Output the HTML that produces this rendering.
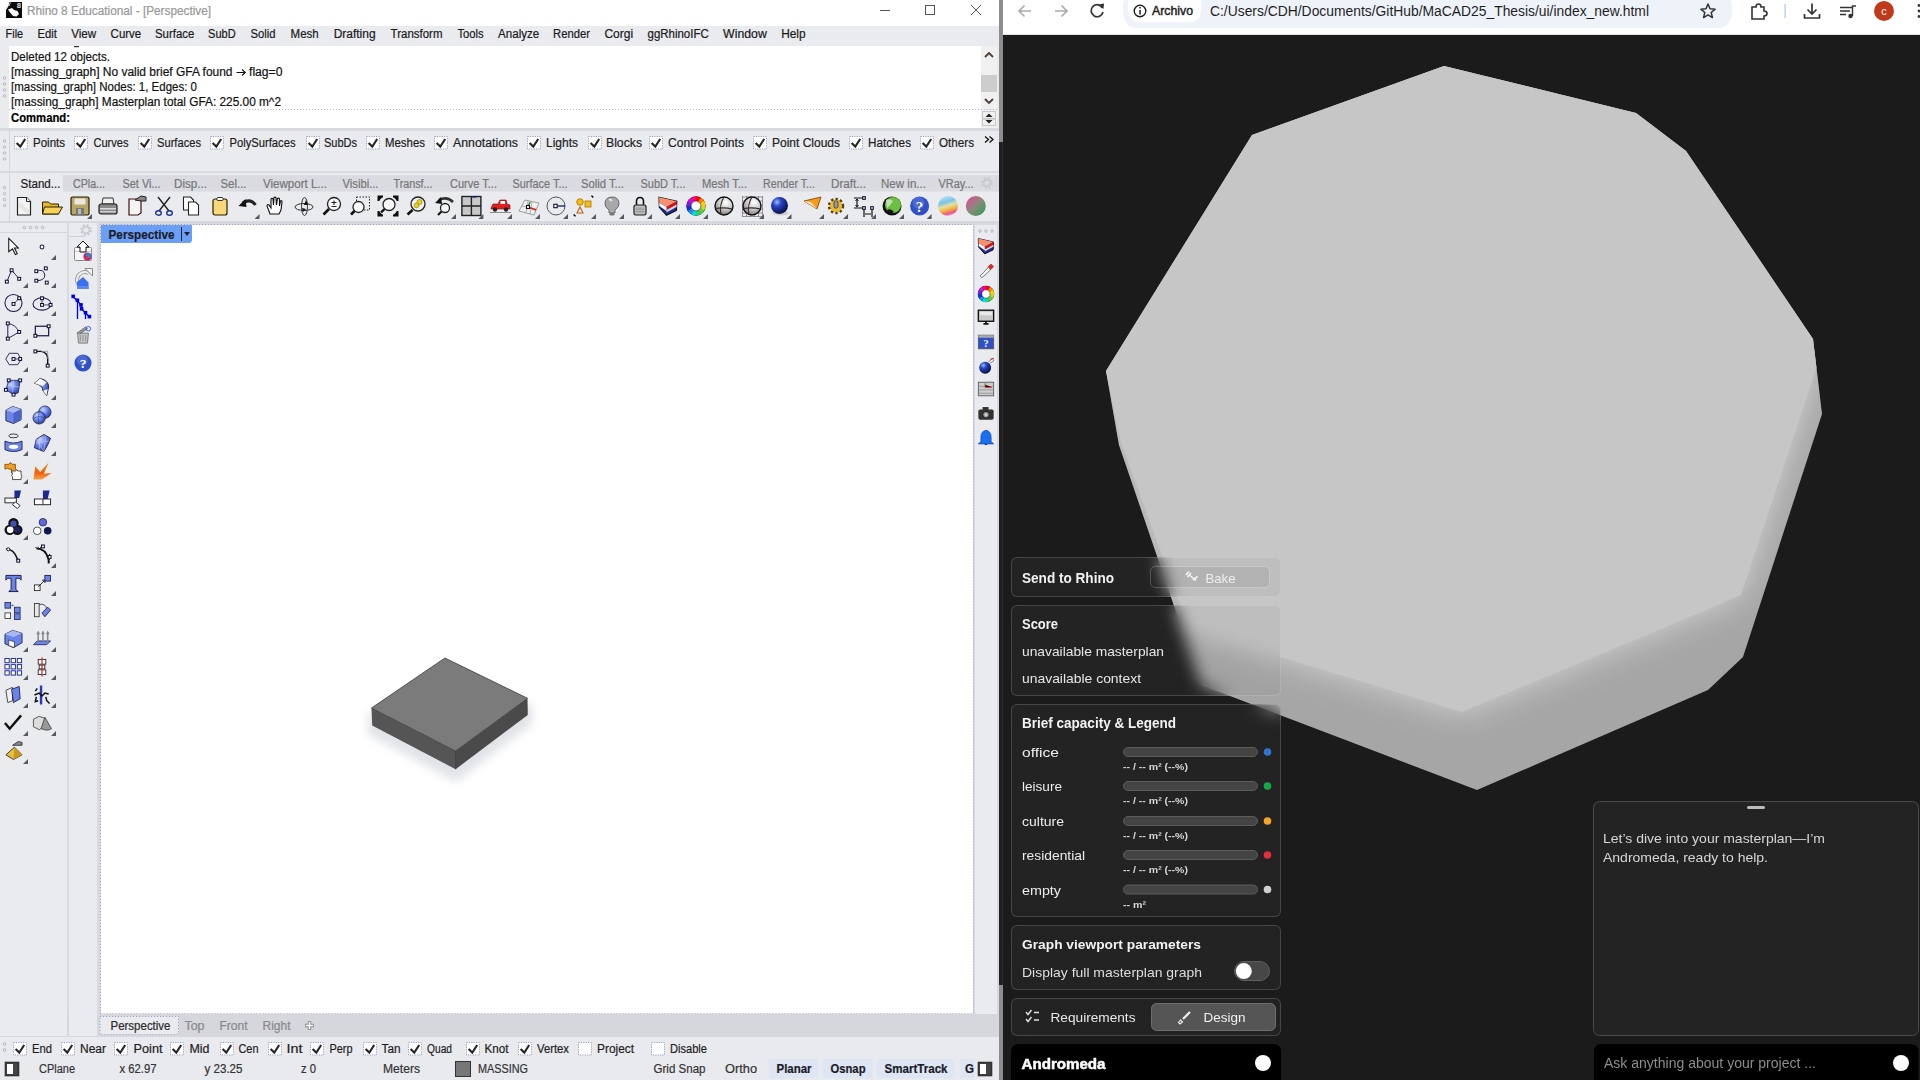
<!DOCTYPE html>
<html><head><meta charset="utf-8"><title>Rhino + Andromeda</title>
<style>html,body{margin:0;padding:0;width:1920px;height:1080px;overflow:hidden;background:#1b1b1b;font-family:"Liberation Sans",sans-serif;position:relative}</style>
</head><body><svg width="1920" height="1080" viewBox="0 0 1920 1080" style="position:absolute;left:0;top:0;display:block"><defs><filter id="shadow" x="-30%" y="-30%" width="160%" height="160%"><feGaussianBlur stdDeviation="5"/></filter><radialGradient id="gs" cx="0.6" cy="0.3" r="0.8"><stop offset="0" stop-color="#ffffff"/><stop offset="0.45" stop-color="#d0d0d0"/><stop offset="1" stop-color="#6a6a6a"/></radialGradient><linearGradient id="rb" x1="0.3" y1="0" x2="0.6" y2="1"><stop offset="0" stop-color="#c8e0f0"/><stop offset="0.3" stop-color="#78c4ec"/><stop offset="0.5" stop-color="#e8e0a0"/><stop offset="0.7" stop-color="#f0b040"/><stop offset="0.88" stop-color="#f05090"/><stop offset="1" stop-color="#f8d0e0"/></linearGradient>
<linearGradient id="pg" x1="0" y1="0" x2="1" y2="1"><stop offset="0" stop-color="#f040a0"/><stop offset="0.5" stop-color="#8a8a7a"/><stop offset="1" stop-color="#20a050"/></linearGradient>
<radialGradient id="bs" cx="0.35" cy="0.3" r="0.7"><stop offset="0" stop-color="#a0c0ff"/><stop offset="0.35" stop-color="#2848c8"/><stop offset="1" stop-color="#08104a"/></radialGradient>
<linearGradient id="cw" x1="0" y1="0" x2="1" y2="1"><stop offset="0" stop-color="#f03030"/><stop offset="0.25" stop-color="#f0c020"/><stop offset="0.5" stop-color="#40c040"/><stop offset="0.75" stop-color="#2040f0"/><stop offset="1" stop-color="#c020c0"/></linearGradient>
<radialGradient id="bsph" cx="0.35" cy="0.3" r="0.75"><stop offset="0" stop-color="#c8d4ff"/><stop offset="0.5" stop-color="#6a84e8"/><stop offset="1" stop-color="#2c3c9a"/></radialGradient><linearGradient id="ex" x1="0" y1="0" x2="0" y2="1"><stop offset="0" stop-color="#e0a000"/><stop offset="0.6" stop-color="#f06010"/><stop offset="1" stop-color="#f8a040"/></linearGradient><clipPath id="silclip"><polygon points="1444,66 1636,113 1686,151 1813,339 1822,414 1743,657 1708,690 1477,790 1201,685 1157,556 1119,445 1106,371 1252,135"/></clipPath><filter id="sideblur" x="-20%" y="-20%" width="140%" height="140%"><feGaussianBlur stdDeviation="16"/></filter><g id="mass"><polygon points="1444,66 1636,113 1686,151 1813,339 1822,414 1743,657 1708,690 1477,790 1201,685 1157,556 1119,445 1106,371 1252,135" fill="#a6a6a6"/><g clip-path="url(#silclip)"><polygon points="1444,66 1636,113 1686,151 1813,339 1816.5,368 1741,595 1697,614 1462,712 1189,629 1121,442 1106,371 1252,135" fill="#d2d2d2" filter="url(#sideblur)"/></g><polygon points="1444,66 1636,113 1686,151 1813,339 1816.5,368 1741,595 1697,614 1462,712 1189,629 1121,442 1106,371 1252,135" fill="#c6c6c6"/></g><filter id="bblur" x="-50%" y="-50%" width="200%" height="200%"><feGaussianBlur stdDeviation="7"/></filter></defs><rect x="0" y="0" width="999" height="1080" fill="#e9ebef" />
<rect x="0" y="0" width="999" height="26" fill="#ffffff" />
<path d="M9.5,2 L22,2 L22,18 L6,18 L6,10 L8.5,6 Z" fill="#0a0a0a" />
<path d="M8,9.5 L12,8 L14,10 L17.5,11 L19,14 L16.5,16.5 L13,16 L10,12.5 Z" fill="#ffffff" />
<path d="M9,6 L10.5,2.5" fill="none" stroke="#fff" stroke-width="0.8" />
<text x="19" y="8" font-family="Liberation Sans" font-size="7" fill="#ffffff" stroke="#ffffff" stroke-width="0.2" text-anchor="middle" >8</text>
<text x="27" y="14.6" font-family="Liberation Sans" font-size="12" fill="#979797" stroke="#979797" stroke-width="0.2" textLength="184" lengthAdjust="spacingAndGlyphs" >Rhino 8 Educational - [Perspective]</text>
<rect x="880" y="10" width="10" height="1" fill="#555" />
<rect x="925.5" y="5.5" width="9" height="9" fill="none" stroke="#555" stroke-width="1" />
<path d="M971,5 L981,15 M981,5 L971,15" fill="none" stroke="#555" stroke-width="1" />
<rect x="0" y="26" width="999" height="20" fill="#e9ebef" />
<text x="5.6" y="37.6" font-family="Liberation Sans" font-size="12" fill="#1a1a1a" stroke="#1a1a1a" stroke-width="0.2" textLength="17.5" lengthAdjust="spacingAndGlyphs" >File</text>
<text x="37.5" y="37.6" font-family="Liberation Sans" font-size="12" fill="#1a1a1a" stroke="#1a1a1a" stroke-width="0.2" textLength="19.4" lengthAdjust="spacingAndGlyphs" >Edit</text>
<text x="71.2" y="37.6" font-family="Liberation Sans" font-size="12" fill="#1a1a1a" stroke="#1a1a1a" stroke-width="0.2" textLength="25" lengthAdjust="spacingAndGlyphs" >View</text>
<text x="110.6" y="37.6" font-family="Liberation Sans" font-size="12" fill="#1a1a1a" stroke="#1a1a1a" stroke-width="0.2" textLength="30.6" lengthAdjust="spacingAndGlyphs" >Curve</text>
<text x="155" y="37.6" font-family="Liberation Sans" font-size="12" fill="#1a1a1a" stroke="#1a1a1a" stroke-width="0.2" textLength="39.4" lengthAdjust="spacingAndGlyphs" >Surface</text>
<text x="208.1" y="37.6" font-family="Liberation Sans" font-size="12" fill="#1a1a1a" stroke="#1a1a1a" stroke-width="0.2" textLength="27.5" lengthAdjust="spacingAndGlyphs" >SubD</text>
<text x="250.6" y="37.6" font-family="Liberation Sans" font-size="12" fill="#1a1a1a" stroke="#1a1a1a" stroke-width="0.2" textLength="25" lengthAdjust="spacingAndGlyphs" >Solid</text>
<text x="290.6" y="37.6" font-family="Liberation Sans" font-size="12" fill="#1a1a1a" stroke="#1a1a1a" stroke-width="0.2" textLength="28.1" lengthAdjust="spacingAndGlyphs" >Mesh</text>
<text x="333.7" y="37.6" font-family="Liberation Sans" font-size="12" fill="#1a1a1a" stroke="#1a1a1a" stroke-width="0.2" textLength="41.9" lengthAdjust="spacingAndGlyphs" >Drafting</text>
<text x="390.6" y="37.6" font-family="Liberation Sans" font-size="12" fill="#1a1a1a" stroke="#1a1a1a" stroke-width="0.2" textLength="51.9" lengthAdjust="spacingAndGlyphs" >Transform</text>
<text x="457.5" y="37.6" font-family="Liberation Sans" font-size="12" fill="#1a1a1a" stroke="#1a1a1a" stroke-width="0.2" textLength="26.2" lengthAdjust="spacingAndGlyphs" >Tools</text>
<text x="498.1" y="37.6" font-family="Liberation Sans" font-size="12" fill="#1a1a1a" stroke="#1a1a1a" stroke-width="0.2" textLength="41.2" lengthAdjust="spacingAndGlyphs" >Analyze</text>
<text x="553.1" y="37.6" font-family="Liberation Sans" font-size="12" fill="#1a1a1a" stroke="#1a1a1a" stroke-width="0.2" textLength="36.9" lengthAdjust="spacingAndGlyphs" >Render</text>
<text x="604.4" y="37.6" font-family="Liberation Sans" font-size="12" fill="#1a1a1a" stroke="#1a1a1a" stroke-width="0.2" textLength="28.7" lengthAdjust="spacingAndGlyphs" >Corgi</text>
<text x="647.5" y="37.6" font-family="Liberation Sans" font-size="12" fill="#1a1a1a" stroke="#1a1a1a" stroke-width="0.2" textLength="61.2" lengthAdjust="spacingAndGlyphs" >ggRhinoIFC</text>
<text x="723.1" y="37.6" font-family="Liberation Sans" font-size="12" fill="#1a1a1a" stroke="#1a1a1a" stroke-width="0.2" textLength="43.7" lengthAdjust="spacingAndGlyphs" >Window</text>
<text x="781.2" y="37.6" font-family="Liberation Sans" font-size="12" fill="#1a1a1a" stroke="#1a1a1a" stroke-width="0.2" textLength="24.4" lengthAdjust="spacingAndGlyphs" >Help</text>
<rect x="9" y="46" width="972" height="82" fill="#ffffff" />
<rect x="74" y="46" width="5" height="1.2" fill="#333" />
<text x="11" y="60.5" font-family="Liberation Sans" font-size="12" fill="#111" stroke="#111" stroke-width="0.2" textLength="99" lengthAdjust="spacingAndGlyphs" >Deleted 12 objects.</text>
<text x="11" y="75.5" font-family="Liberation Sans" font-size="12" fill="#111" stroke="#111" stroke-width="0.2" textLength="221.5" lengthAdjust="spacingAndGlyphs" >[massing_graph] No valid brief GFA found</text>
<text x="11" y="90.5" font-family="Liberation Sans" font-size="12" fill="#111" stroke="#111" stroke-width="0.2" textLength="186" lengthAdjust="spacingAndGlyphs" >[massing_graph] Nodes: 1, Edges: 0</text>
<text x="11" y="105.5" font-family="Liberation Sans" font-size="12" fill="#111" stroke="#111" stroke-width="0.2" textLength="270" lengthAdjust="spacingAndGlyphs" >[massing_graph] Masterplan total GFA: 225.00 m^2</text>
<path d="M236.5,72.5 L245,72.5 M242,69.5 L245.3,72.5 L242,75.5" fill="none" stroke="#111" stroke-width="1.1" />
<text x="249" y="75.5" font-family="Liberation Sans" font-size="12" fill="#111" stroke="#111" stroke-width="0.2" textLength="33.5" lengthAdjust="spacingAndGlyphs" >flag=0</text>
<text x="11" y="121.5" font-family="Liberation Sans" font-size="12" fill="#000" stroke="#000" stroke-width="0.2" font-weight="700" textLength="59" lengthAdjust="spacingAndGlyphs" >Command:</text>
<path d="M9,109.5 L997,109.5" fill="none" stroke="#b4b8d8" stroke-width="1" stroke-dasharray="1 2"/>
<circle cx="4.5" cy="78" r="1.3" fill="none" stroke="#a8acb8" stroke-width="0.8"/>
<circle cx="4.5" cy="84" r="1.3" fill="none" stroke="#a8acb8" stroke-width="0.8"/>
<circle cx="4.5" cy="90" r="1.3" fill="none" stroke="#a8acb8" stroke-width="0.8"/>
<circle cx="4.5" cy="96" r="1.3" fill="none" stroke="#a8acb8" stroke-width="0.8"/>
<rect x="981" y="46" width="16" height="63" fill="#f0f0f0" />
<path d="M985,57 L989,53 L993,57" fill="none" stroke="#4a4038" stroke-width="1.9" />
<rect x="981" y="75" width="16" height="17" fill="#cdcdcd" />
<path d="M985,99 L989,103 L993,99" fill="none" stroke="#4a4038" stroke-width="1.9" />
<rect x="981" y="110" width="16" height="18" fill="#f0f0f0" />
<rect x="982.5" y="111.5" width="13" height="14" fill="none" stroke="#c8c8c8" stroke-width="1" />
<polygon points="985.5,117 992.5,117 989,113.5" fill="#222" />
<polygon points="985.5,120 992.5,120 989,123.5" fill="#222" />
<rect x="983" y="118" width="12" height="1.6" fill="#c4c4c4" />
<rect x="0" y="128" width="999" height="3" fill="#d8dadf" />
<rect x="0" y="131" width="999" height="40" fill="#e9ebef" />
<circle cx="4.5" cy="141" r="1.3" fill="none" stroke="#a8acb8" stroke-width="0.8"/>
<circle cx="4.5" cy="147" r="1.3" fill="none" stroke="#a8acb8" stroke-width="0.8"/>
<circle cx="4.5" cy="153" r="1.3" fill="none" stroke="#a8acb8" stroke-width="0.8"/>
<circle cx="4.5" cy="159" r="1.3" fill="none" stroke="#a8acb8" stroke-width="0.8"/>
<rect x="9" y="131" width="1" height="40" fill="#d4d6db" />
<rect x="14.5" y="136.5" width="13" height="12.5" fill="#fdfdfd" stroke="#9a9fc8" stroke-width="1" stroke-dasharray="1.2 1.2"/>
<path d="M16.6,143 L20.3,146.6 L25.2,139" fill="none" stroke="#262626" stroke-width="2.1" />
<text x="33" y="146.5" font-family="Liberation Sans" font-size="12" fill="#1e1e1e" stroke="#1e1e1e" stroke-width="0.2" textLength="32" lengthAdjust="spacingAndGlyphs" >Points</text>
<rect x="74.5" y="136.5" width="13" height="12.5" fill="#fdfdfd" stroke="#9a9fc8" stroke-width="1" stroke-dasharray="1.2 1.2"/>
<path d="M76.6,143 L80.3,146.6 L85.2,139" fill="none" stroke="#262626" stroke-width="2.1" />
<text x="93.5" y="146.5" font-family="Liberation Sans" font-size="12" fill="#1e1e1e" stroke="#1e1e1e" stroke-width="0.2" textLength="35" lengthAdjust="spacingAndGlyphs" >Curves</text>
<rect x="138.5" y="136.5" width="13" height="12.5" fill="#fdfdfd" stroke="#9a9fc8" stroke-width="1" stroke-dasharray="1.2 1.2"/>
<path d="M140.6,143 L144.3,146.6 L149.2,139" fill="none" stroke="#262626" stroke-width="2.1" />
<text x="157" y="146.5" font-family="Liberation Sans" font-size="12" fill="#1e1e1e" stroke="#1e1e1e" stroke-width="0.2" textLength="44" lengthAdjust="spacingAndGlyphs" >Surfaces</text>
<rect x="210.5" y="136.5" width="13" height="12.5" fill="#fdfdfd" stroke="#9a9fc8" stroke-width="1" stroke-dasharray="1.2 1.2"/>
<path d="M212.6,143 L216.3,146.6 L221.2,139" fill="none" stroke="#262626" stroke-width="2.1" />
<text x="229.5" y="146.5" font-family="Liberation Sans" font-size="12" fill="#1e1e1e" stroke="#1e1e1e" stroke-width="0.2" textLength="66" lengthAdjust="spacingAndGlyphs" >PolySurfaces</text>
<rect x="306.5" y="136.5" width="13" height="12.5" fill="#fdfdfd" stroke="#9a9fc8" stroke-width="1" stroke-dasharray="1.2 1.2"/>
<path d="M308.6,143 L312.3,146.6 L317.2,139" fill="none" stroke="#262626" stroke-width="2.1" />
<text x="324" y="146.5" font-family="Liberation Sans" font-size="12" fill="#1e1e1e" stroke="#1e1e1e" stroke-width="0.2" textLength="33" lengthAdjust="spacingAndGlyphs" >SubDs</text>
<rect x="366.5" y="136.5" width="13" height="12.5" fill="#fdfdfd" stroke="#9a9fc8" stroke-width="1" stroke-dasharray="1.2 1.2"/>
<path d="M368.6,143 L372.3,146.6 L377.2,139" fill="none" stroke="#262626" stroke-width="2.1" />
<text x="385" y="146.5" font-family="Liberation Sans" font-size="12" fill="#1e1e1e" stroke="#1e1e1e" stroke-width="0.2" textLength="40" lengthAdjust="spacingAndGlyphs" >Meshes</text>
<rect x="434.5" y="136.5" width="13" height="12.5" fill="#fdfdfd" stroke="#9a9fc8" stroke-width="1" stroke-dasharray="1.2 1.2"/>
<path d="M436.6,143 L440.3,146.6 L445.2,139" fill="none" stroke="#262626" stroke-width="2.1" />
<text x="453" y="146.5" font-family="Liberation Sans" font-size="12" fill="#1e1e1e" stroke="#1e1e1e" stroke-width="0.2" textLength="65" lengthAdjust="spacingAndGlyphs" >Annotations</text>
<rect x="527.5" y="136.5" width="13" height="12.5" fill="#fdfdfd" stroke="#9a9fc8" stroke-width="1" stroke-dasharray="1.2 1.2"/>
<path d="M529.6,143 L533.3,146.6 L538.2,139" fill="none" stroke="#262626" stroke-width="2.1" />
<text x="546" y="146.5" font-family="Liberation Sans" font-size="12" fill="#1e1e1e" stroke="#1e1e1e" stroke-width="0.2" textLength="32" lengthAdjust="spacingAndGlyphs" >Lights</text>
<rect x="588.5" y="136.5" width="13" height="12.5" fill="#fdfdfd" stroke="#9a9fc8" stroke-width="1" stroke-dasharray="1.2 1.2"/>
<path d="M590.6,143 L594.3,146.6 L599.2,139" fill="none" stroke="#262626" stroke-width="2.1" />
<text x="606" y="146.5" font-family="Liberation Sans" font-size="12" fill="#1e1e1e" stroke="#1e1e1e" stroke-width="0.2" textLength="36" lengthAdjust="spacingAndGlyphs" >Blocks</text>
<rect x="649.5" y="136.5" width="13" height="12.5" fill="#fdfdfd" stroke="#9a9fc8" stroke-width="1" stroke-dasharray="1.2 1.2"/>
<path d="M651.6,143 L655.3,146.6 L660.2,139" fill="none" stroke="#262626" stroke-width="2.1" />
<text x="668" y="146.5" font-family="Liberation Sans" font-size="12" fill="#1e1e1e" stroke="#1e1e1e" stroke-width="0.2" textLength="76" lengthAdjust="spacingAndGlyphs" >Control Points</text>
<rect x="753.5" y="136.5" width="13" height="12.5" fill="#fdfdfd" stroke="#9a9fc8" stroke-width="1" stroke-dasharray="1.2 1.2"/>
<path d="M755.6,143 L759.3,146.6 L764.2,139" fill="none" stroke="#262626" stroke-width="2.1" />
<text x="772" y="146.5" font-family="Liberation Sans" font-size="12" fill="#1e1e1e" stroke="#1e1e1e" stroke-width="0.2" textLength="68" lengthAdjust="spacingAndGlyphs" >Point Clouds</text>
<rect x="849.5" y="136.5" width="13" height="12.5" fill="#fdfdfd" stroke="#9a9fc8" stroke-width="1" stroke-dasharray="1.2 1.2"/>
<path d="M851.6,143 L855.3,146.6 L860.2,139" fill="none" stroke="#262626" stroke-width="2.1" />
<text x="868" y="146.5" font-family="Liberation Sans" font-size="12" fill="#1e1e1e" stroke="#1e1e1e" stroke-width="0.2" textLength="43" lengthAdjust="spacingAndGlyphs" >Hatches</text>
<rect x="920.5" y="136.5" width="13" height="12.5" fill="#fdfdfd" stroke="#9a9fc8" stroke-width="1" stroke-dasharray="1.2 1.2"/>
<path d="M922.6,143 L926.3,146.6 L931.2,139" fill="none" stroke="#262626" stroke-width="2.1" />
<text x="939" y="146.5" font-family="Liberation Sans" font-size="12" fill="#1e1e1e" stroke="#1e1e1e" stroke-width="0.2" textLength="35" lengthAdjust="spacingAndGlyphs" >Others</text>
<path d="M985,136.5 L988.5,139.5 L985,142.5 M989.5,136.5 L993,139.5 L989.5,142.5" fill="none" stroke="#111" stroke-width="1.3" />
<rect x="0" y="171" width="999" height="2" fill="#d8dadf" />
<rect x="0" y="173" width="999" height="48" fill="#e9ebef" />
<rect x="62" y="175" width="937" height="16.5" fill="#d9dbe0" />
<path d="M10,192 L10,173.2 L59.5,173.2 Q62.8,173.2 62.8,176.5 L62.8,192 Z" fill="#e9ebef" />
<circle cx="4.5" cy="187.5" r="1.3" fill="none" stroke="#a8acb8" stroke-width="0.8"/>
<circle cx="4.5" cy="193.5" r="1.3" fill="none" stroke="#a8acb8" stroke-width="0.8"/>
<circle cx="4.5" cy="199.5" r="1.3" fill="none" stroke="#a8acb8" stroke-width="0.8"/>
<circle cx="4.5" cy="205.5" r="1.3" fill="none" stroke="#a8acb8" stroke-width="0.8"/>
<rect x="9" y="173" width="1" height="48" fill="#d4d6db" />
<text x="20.5" y="188.1" font-family="Liberation Sans" font-size="12" fill="#222" stroke="#222" stroke-width="0.2" textLength="40" lengthAdjust="spacingAndGlyphs" >Stand...</text>
<text x="73" y="188.1" font-family="Liberation Sans" font-size="12" fill="#767676" stroke="#767676" stroke-width="0.2" textLength="32" lengthAdjust="spacingAndGlyphs" >CPla...</text>
<text x="122.5" y="188.1" font-family="Liberation Sans" font-size="12" fill="#767676" stroke="#767676" stroke-width="0.2" textLength="38" lengthAdjust="spacingAndGlyphs" >Set Vi...</text>
<text x="174" y="188.1" font-family="Liberation Sans" font-size="12" fill="#767676" stroke="#767676" stroke-width="0.2" textLength="33" lengthAdjust="spacingAndGlyphs" >Disp...</text>
<text x="220.5" y="188.1" font-family="Liberation Sans" font-size="12" fill="#767676" stroke="#767676" stroke-width="0.2" textLength="26" lengthAdjust="spacingAndGlyphs" >Sel...</text>
<text x="263" y="188.1" font-family="Liberation Sans" font-size="12" fill="#767676" stroke="#767676" stroke-width="0.2" textLength="64" lengthAdjust="spacingAndGlyphs" >Viewport L...</text>
<text x="342.5" y="188.1" font-family="Liberation Sans" font-size="12" fill="#767676" stroke="#767676" stroke-width="0.2" textLength="36" lengthAdjust="spacingAndGlyphs" >Visibi...</text>
<text x="393.5" y="188.1" font-family="Liberation Sans" font-size="12" fill="#767676" stroke="#767676" stroke-width="0.2" textLength="39" lengthAdjust="spacingAndGlyphs" >Transf...</text>
<text x="450" y="188.1" font-family="Liberation Sans" font-size="12" fill="#767676" stroke="#767676" stroke-width="0.2" textLength="47" lengthAdjust="spacingAndGlyphs" >Curve T...</text>
<text x="512.5" y="188.1" font-family="Liberation Sans" font-size="12" fill="#767676" stroke="#767676" stroke-width="0.2" textLength="55" lengthAdjust="spacingAndGlyphs" >Surface T...</text>
<text x="581" y="188.1" font-family="Liberation Sans" font-size="12" fill="#767676" stroke="#767676" stroke-width="0.2" textLength="43" lengthAdjust="spacingAndGlyphs" >Solid T...</text>
<text x="640.5" y="188.1" font-family="Liberation Sans" font-size="12" fill="#767676" stroke="#767676" stroke-width="0.2" textLength="45" lengthAdjust="spacingAndGlyphs" >SubD T...</text>
<text x="702" y="188.1" font-family="Liberation Sans" font-size="12" fill="#767676" stroke="#767676" stroke-width="0.2" textLength="45" lengthAdjust="spacingAndGlyphs" >Mesh T...</text>
<text x="763" y="188.1" font-family="Liberation Sans" font-size="12" fill="#767676" stroke="#767676" stroke-width="0.2" textLength="52" lengthAdjust="spacingAndGlyphs" >Render T...</text>
<text x="831" y="188.1" font-family="Liberation Sans" font-size="12" fill="#767676" stroke="#767676" stroke-width="0.2" textLength="35" lengthAdjust="spacingAndGlyphs" >Draft...</text>
<text x="881" y="188.1" font-family="Liberation Sans" font-size="12" fill="#767676" stroke="#767676" stroke-width="0.2" textLength="45" lengthAdjust="spacingAndGlyphs" >New in...</text>
<text x="938.5" y="188.1" font-family="Liberation Sans" font-size="12" fill="#767676" stroke="#767676" stroke-width="0.2" textLength="35" lengthAdjust="spacingAndGlyphs" >VRay...</text>
<g transform="translate(987,183)"><circle r="4.6" fill="none" stroke="#c8cad0" stroke-width="2.6" stroke-dasharray="2 1.6"/><circle r="3.2" fill="none" stroke="#c8cad0" stroke-width="1.4"/></g>
<rect x="0" y="221" width="999" height="2" fill="#d6d8dd" />
<rect x="0" y="223" width="999" height="857" fill="#d8dadf" />
<rect x="0" y="223" width="67" height="813" fill="#e9ebef" />
<rect x="69" y="223" width="28" height="813" fill="#e9ebef" />
<circle cx="24.5" cy="227.5" r="1.3" fill="none" stroke="#a8acb8" stroke-width="0.8"/>
<circle cx="30.5" cy="227.5" r="1.3" fill="none" stroke="#a8acb8" stroke-width="0.8"/>
<circle cx="36.5" cy="227.5" r="1.3" fill="none" stroke="#a8acb8" stroke-width="0.8"/>
<circle cx="42.5" cy="227.5" r="1.3" fill="none" stroke="#a8acb8" stroke-width="0.8"/>
<rect x="0" y="232" width="67" height="1" fill="#d4d6db" />
<rect x="69" y="236" width="15" height="1" fill="#cfd1d6" />
<g transform="translate(86,230)"><circle r="4.6" fill="none" stroke="#c8cad0" stroke-width="2.6" stroke-dasharray="2 1.6"/><circle r="3.2" fill="none" stroke="#c8cad0" stroke-width="1.4"/></g>
<rect x="101" y="225" width="872" height="789" fill="#ffffff" />
<path d="M100.5,1014 L100.5,224.5 L973.5,224.5" fill="none" stroke="#9aa0c8" stroke-width="1" stroke-dasharray="1 2"/>
<path d="M100.5,1013.5 L973.5,1013.5 L973.5,224.5" fill="none" stroke="#9aa0c8" stroke-width="1" stroke-dasharray="1 2"/>
<path d="M101,225 L192,225 L192,241 L190,243 L101,243 Z" fill="#6b9ff6" />
<text x="108.5" y="238.5" font-family="Liberation Sans" font-size="13" fill="#1c1c2a" stroke="#1c1c2a" stroke-width="0.2" font-weight="700" textLength="66" lengthAdjust="spacingAndGlyphs" >Perspective</text>
<rect x="181" y="227" width="1" height="14" fill="#222" />
<polygon points="184,232 190,232 187,236" fill="#222" />
<polygon points="368,716 445,668 532,706 532,724 456,782 368,734" fill="#b4b8c4" filter="url(#shadow)" opacity="0.4"/>
<polygon points="371.5,708 455.6,751 455.6,769.2 372.2,725.4" fill="#555555" />
<polygon points="455.6,751 527.5,698.3 527.8,715 455.6,769.2" fill="#4a4a4a" />
<polygon points="371.5,708 444.9,658 527.5,698.3 455.6,751" fill="#7b7b7b" stroke="#3c3c3c" stroke-width="0.8" />
<path d="M455.6,751 L455.6,769.2" fill="none" stroke="#333" stroke-width="0.8" />
<rect x="975" y="225" width="22" height="811" fill="#e9ebef" />
<circle cx="980" cy="231" r="1.3" fill="none" stroke="#a8acb8" stroke-width="0.8"/>
<circle cx="986" cy="231" r="1.3" fill="none" stroke="#a8acb8" stroke-width="0.8"/>
<circle cx="992" cy="231" r="1.3" fill="none" stroke="#a8acb8" stroke-width="0.8"/>
<rect x="0" y="1014" width="999" height="23" fill="#d5d7dc" />
<rect x="0" y="1014" width="67" height="22" fill="#e9ebef" />
<rect x="69" y="1014" width="28" height="22" fill="#e9ebef" />
<path d="M100,1016.5 L178.5,1016.5 L178.5,1031 Q178.5,1034.5 175,1034.5 L100,1034.5 Z" fill="#e9ebef" stroke="#9aa0c8" stroke-width="1" stroke-dasharray="1 2"/>
<text x="110.5" y="1029.5" font-family="Liberation Sans" font-size="12" fill="#2a2a2a" stroke="#2a2a2a" stroke-width="0.2" textLength="60" lengthAdjust="spacingAndGlyphs" >Perspective</text>
<text x="184.5" y="1029.5" font-family="Liberation Sans" font-size="12" fill="#8a8a8a" stroke="#8a8a8a" stroke-width="0.2" textLength="20" lengthAdjust="spacingAndGlyphs" >Top</text>
<text x="219.5" y="1029.5" font-family="Liberation Sans" font-size="12" fill="#8a8a8a" stroke="#8a8a8a" stroke-width="0.2" textLength="28" lengthAdjust="spacingAndGlyphs" >Front</text>
<text x="262.5" y="1029.5" font-family="Liberation Sans" font-size="12" fill="#8a8a8a" stroke="#8a8a8a" stroke-width="0.2" textLength="28" lengthAdjust="spacingAndGlyphs" >Right</text>
<path d="M309.5,1021 L309.5,1030 M305,1025.5 L314,1025.5" fill="none" stroke="#8a8a8a" stroke-width="3.4" />
<path d="M309.5,1021.8 L309.5,1029.2 M305.8,1025.5 L313.2,1025.5" fill="none" stroke="#fff" stroke-width="1.5" />
<rect x="0" y="1037" width="999" height="43" fill="#e9eaee" />
<circle cx="4.5" cy="1044" r="1.3" fill="none" stroke="#a8acb8" stroke-width="0.8"/>
<circle cx="4.5" cy="1050" r="1.3" fill="none" stroke="#a8acb8" stroke-width="0.8"/>
<rect x="13.5" y="1042.5" width="13" height="12.5" fill="#fdfdfd" stroke="#9a9fc8" stroke-width="1" stroke-dasharray="1.2 1.2"/>
<path d="M15.6,1049 L19.3,1052.6 L24.2,1045" fill="none" stroke="#262626" stroke-width="2.1" />
<text x="32" y="1053" font-family="Liberation Sans" font-size="12" fill="#1e1e1e" stroke="#1e1e1e" stroke-width="0.2" textLength="20" lengthAdjust="spacingAndGlyphs" >End</text>
<rect x="61.5" y="1042.5" width="13" height="12.5" fill="#fdfdfd" stroke="#9a9fc8" stroke-width="1" stroke-dasharray="1.2 1.2"/>
<path d="M63.6,1049 L67.3,1052.6 L72.2,1045" fill="none" stroke="#262626" stroke-width="2.1" />
<text x="80" y="1053" font-family="Liberation Sans" font-size="12" fill="#1e1e1e" stroke="#1e1e1e" stroke-width="0.2" textLength="26" lengthAdjust="spacingAndGlyphs" >Near</text>
<rect x="114.5" y="1042.5" width="13" height="12.5" fill="#fdfdfd" stroke="#9a9fc8" stroke-width="1" stroke-dasharray="1.2 1.2"/>
<path d="M116.6,1049 L120.3,1052.6 L125.2,1045" fill="none" stroke="#262626" stroke-width="2.1" />
<text x="133.5" y="1053" font-family="Liberation Sans" font-size="12" fill="#1e1e1e" stroke="#1e1e1e" stroke-width="0.2" textLength="29" lengthAdjust="spacingAndGlyphs" >Point</text>
<rect x="170.5" y="1042.5" width="13" height="12.5" fill="#fdfdfd" stroke="#9a9fc8" stroke-width="1" stroke-dasharray="1.2 1.2"/>
<path d="M172.6,1049 L176.3,1052.6 L181.2,1045" fill="none" stroke="#262626" stroke-width="2.1" />
<text x="189.5" y="1053" font-family="Liberation Sans" font-size="12" fill="#1e1e1e" stroke="#1e1e1e" stroke-width="0.2" textLength="20" lengthAdjust="spacingAndGlyphs" >Mid</text>
<rect x="220.5" y="1042.5" width="13" height="12.5" fill="#fdfdfd" stroke="#9a9fc8" stroke-width="1" stroke-dasharray="1.2 1.2"/>
<path d="M222.6,1049 L226.3,1052.6 L231.2,1045" fill="none" stroke="#262626" stroke-width="2.1" />
<text x="238.5" y="1053" font-family="Liberation Sans" font-size="12" fill="#1e1e1e" stroke="#1e1e1e" stroke-width="0.2" textLength="20" lengthAdjust="spacingAndGlyphs" >Cen</text>
<rect x="268.5" y="1042.5" width="13" height="12.5" fill="#fdfdfd" stroke="#9a9fc8" stroke-width="1" stroke-dasharray="1.2 1.2"/>
<path d="M270.6,1049 L274.3,1052.6 L279.2,1045" fill="none" stroke="#262626" stroke-width="2.1" />
<text x="286.5" y="1053" font-family="Liberation Sans" font-size="12" fill="#1e1e1e" stroke="#1e1e1e" stroke-width="0.2" textLength="16" lengthAdjust="spacingAndGlyphs" >Int</text>
<rect x="310.5" y="1042.5" width="13" height="12.5" fill="#fdfdfd" stroke="#9a9fc8" stroke-width="1" stroke-dasharray="1.2 1.2"/>
<path d="M312.6,1049 L316.3,1052.6 L321.2,1045" fill="none" stroke="#262626" stroke-width="2.1" />
<text x="329.5" y="1053" font-family="Liberation Sans" font-size="12" fill="#1e1e1e" stroke="#1e1e1e" stroke-width="0.2" textLength="23" lengthAdjust="spacingAndGlyphs" >Perp</text>
<rect x="363.5" y="1042.5" width="13" height="12.5" fill="#fdfdfd" stroke="#9a9fc8" stroke-width="1" stroke-dasharray="1.2 1.2"/>
<path d="M365.6,1049 L369.3,1052.6 L374.2,1045" fill="none" stroke="#262626" stroke-width="2.1" />
<text x="381.5" y="1053" font-family="Liberation Sans" font-size="12" fill="#1e1e1e" stroke="#1e1e1e" stroke-width="0.2" textLength="19" lengthAdjust="spacingAndGlyphs" >Tan</text>
<rect x="408.5" y="1042.5" width="13" height="12.5" fill="#fdfdfd" stroke="#9a9fc8" stroke-width="1" stroke-dasharray="1.2 1.2"/>
<path d="M410.6,1049 L414.3,1052.6 L419.2,1045" fill="none" stroke="#262626" stroke-width="2.1" />
<text x="427" y="1053" font-family="Liberation Sans" font-size="12" fill="#1e1e1e" stroke="#1e1e1e" stroke-width="0.2" textLength="25" lengthAdjust="spacingAndGlyphs" >Quad</text>
<rect x="466.5" y="1042.5" width="13" height="12.5" fill="#fdfdfd" stroke="#9a9fc8" stroke-width="1" stroke-dasharray="1.2 1.2"/>
<path d="M468.6,1049 L472.3,1052.6 L477.2,1045" fill="none" stroke="#262626" stroke-width="2.1" />
<text x="484.5" y="1053" font-family="Liberation Sans" font-size="12" fill="#1e1e1e" stroke="#1e1e1e" stroke-width="0.2" textLength="24" lengthAdjust="spacingAndGlyphs" >Knot</text>
<rect x="518.5" y="1042.5" width="13" height="12.5" fill="#fdfdfd" stroke="#9a9fc8" stroke-width="1" stroke-dasharray="1.2 1.2"/>
<path d="M520.6,1049 L524.3,1052.6 L529.2,1045" fill="none" stroke="#262626" stroke-width="2.1" />
<text x="537" y="1053" font-family="Liberation Sans" font-size="12" fill="#1e1e1e" stroke="#1e1e1e" stroke-width="0.2" textLength="32" lengthAdjust="spacingAndGlyphs" >Vertex</text>
<rect x="578.5" y="1042.5" width="13" height="12.5" fill="#fdfdfd" stroke="#9a9fc8" stroke-width="1" stroke-dasharray="1.2 1.2"/>
<text x="597" y="1053" font-family="Liberation Sans" font-size="12" fill="#1e1e1e" stroke="#1e1e1e" stroke-width="0.2" textLength="37" lengthAdjust="spacingAndGlyphs" >Project</text>
<rect x="651.5" y="1042.5" width="13" height="12.5" fill="#fdfdfd" stroke="#9a9fc8" stroke-width="1" stroke-dasharray="1.2 1.2"/>
<text x="670" y="1053" font-family="Liberation Sans" font-size="12" fill="#1e1e1e" stroke="#1e1e1e" stroke-width="0.2" textLength="37" lengthAdjust="spacingAndGlyphs" >Disable</text>
<rect x="5.5" y="1062.5" width="13" height="13" fill="#444" stroke="#333" stroke-width="1.6" />
<rect x="7" y="1064" width="6" height="10" fill="#fff" />
<text x="39" y="1073.3" font-family="Liberation Sans" font-size="12" fill="#333" stroke="#333" stroke-width="0.2" textLength="36" lengthAdjust="spacingAndGlyphs" >CPlane</text>
<text x="119.5" y="1073.3" font-family="Liberation Sans" font-size="12" fill="#333" stroke="#333" stroke-width="0.2" textLength="37" lengthAdjust="spacingAndGlyphs" >x 62.97</text>
<text x="204.5" y="1073.3" font-family="Liberation Sans" font-size="12" fill="#333" stroke="#333" stroke-width="0.2" textLength="38" lengthAdjust="spacingAndGlyphs" >y 23.25</text>
<text x="301" y="1073.3" font-family="Liberation Sans" font-size="12" fill="#333" stroke="#333" stroke-width="0.2" textLength="15" lengthAdjust="spacingAndGlyphs" >z 0</text>
<text x="383" y="1073.3" font-family="Liberation Sans" font-size="12" fill="#333" stroke="#333" stroke-width="0.2" textLength="37" lengthAdjust="spacingAndGlyphs" >Meters</text>
<rect x="455.5" y="1061.5" width="15" height="15" fill="#777" stroke="#333" stroke-width="1" />
<text x="478" y="1073.3" font-family="Liberation Sans" font-size="12" fill="#333" stroke="#333" stroke-width="0.2" textLength="50" lengthAdjust="spacingAndGlyphs" >MASSING</text>
<text x="653.5" y="1073.3" font-family="Liberation Sans" font-size="12" fill="#333" stroke="#333" stroke-width="0.2" textLength="52" lengthAdjust="spacingAndGlyphs" >Grid Snap</text>
<text x="725" y="1073.3" font-family="Liberation Sans" font-size="12" fill="#333" stroke="#333" stroke-width="0.2" textLength="32" lengthAdjust="spacingAndGlyphs" >Ortho</text>
<rect x="768.5" y="1059" width="50.0" height="19.5" fill="#dfe6f3" />
<text x="776.5" y="1073.3" font-family="Liberation Sans" font-size="12" fill="#1a1a2a" stroke="#1a1a2a" stroke-width="0.2" font-weight="700" textLength="35" lengthAdjust="spacingAndGlyphs" >Planar</text>
<rect x="822.5" y="1059" width="50.0" height="19.5" fill="#dfe6f3" />
<text x="830.5" y="1073.3" font-family="Liberation Sans" font-size="12" fill="#1a1a2a" stroke="#1a1a2a" stroke-width="0.2" font-weight="700" textLength="35" lengthAdjust="spacingAndGlyphs" >Osnap</text>
<rect x="876.5" y="1059" width="78.0" height="19.5" fill="#dfe6f3" />
<text x="884.5" y="1073.3" font-family="Liberation Sans" font-size="12" fill="#1a1a2a" stroke="#1a1a2a" stroke-width="0.2" font-weight="700" textLength="63" lengthAdjust="spacingAndGlyphs" >SmartTrack</text>
<rect x="959.5" y="1059" width="15.0" height="19.5" fill="#dfe6f3" />
<text x="965" y="1073.3" font-family="Liberation Sans" font-size="12" fill="#1a1a2a" stroke="#1a1a2a" stroke-width="0.2" font-weight="700" textLength="9" lengthAdjust="spacingAndGlyphs" >G</text>
<rect x="978.5" y="1062.5" width="13" height="13" fill="#444" stroke="#333" stroke-width="1.6" />
<rect x="980" y="1064" width="6" height="10" fill="#fff" />
<g transform="translate(13.5,196.0) scale(1.0)"><path d="M4,1.5 L13,1.5 L17,5.5 L17,19 L4,19 Z" fill="#f4f4f6" stroke="#222" stroke-width="1.2"/><path d="M13,1.5 L13,5.5 L17,5.5" fill="#fff" stroke="#222"/><path d="M6,8 L15,17" stroke="#dcd8c8" stroke-width="4" opacity="0.5"/></g>
<g transform="translate(41.5,196.0) scale(1.0)"><path d="M1,6 L7,6 L9,8 L17,8 L17,18 L1,18 Z" fill="#e8b830" stroke="#2a2000" stroke-width="1"/><path d="M3,11 L21,11 L17,18 L1,18 Z" fill="#f7d25a" stroke="#2a2000" stroke-width="1"/></g>
<g transform="translate(70.0,196.0) scale(1.0)"><rect x="1" y="1" width="18" height="18" rx="1.5" fill="#b9a76a" stroke="#2a2000" stroke-width="1.2"/><rect x="4.5" y="2.5" width="11" height="6" fill="#e8e8e0"/><rect x="6" y="12" width="8" height="7" fill="#777"/><rect x="8" y="13" width="3" height="5" fill="#bbb"/></g>
<g transform="translate(98.0,196.0) scale(1.0)"><path d="M5,2 L15,2 L16,8 L4,8 Z" fill="#f0f0f0" stroke="#333" stroke-width="1"/><rect x="1" y="8" width="18" height="10" rx="2" fill="#8a8a8a" stroke="#222" stroke-width="1.2"/><rect x="2" y="12" width="16" height="1.5" fill="#ddd"/><rect x="2" y="15" width="16" height="1.5" fill="#ccc"/></g>
<g transform="translate(127.0,196.0) scale(1.0)"><path d="M2,3 L14,3 L14,17 L11,19 L2,19 Z" fill="#f4f4f4" stroke="#4a1010" stroke-width="1.2"/><path d="M8,4 L14,0 L19,1 L19,5 L14,5 Z" fill="#888" stroke="#222" stroke-width="1"/></g>
<g transform="translate(154.0,196.0) scale(1.0)"><path d="M4,1 L15,15 M16,1 L5,15" stroke="#222" stroke-width="1.4"/><ellipse cx="4.5" cy="17" rx="2.8" ry="2.2" fill="none" stroke="#2030a0" stroke-width="1.4"/><ellipse cx="15.5" cy="17" rx="2.8" ry="2.2" fill="none" stroke="#2030a0" stroke-width="1.4"/></g>
<g transform="translate(181.5,196.0) scale(1.0)"><path d="M2,1 L9,1 L12,4 L12,14 L2,14 Z" fill="#fff" stroke="#222" stroke-width="1.1"/><path d="M7,6 L14,6 L17,9 L17,19 L7,19 Z" fill="#fff" stroke="#222" stroke-width="1.1"/></g>
<g transform="translate(210.0,196.0) scale(1.0)"><rect x="3" y="3" width="14" height="16" rx="2" fill="#f8d878" stroke="#2a2000" stroke-width="1.2"/><rect x="7" y="1.5" width="6" height="3" rx="1" fill="#fff" stroke="#333" stroke-width="1"/></g>
<g transform="translate(237.5,196.0) scale(1.0)"><path d="M18,9 Q13,2 5,7" fill="none" stroke="#222" stroke-width="3"/><path d="M1,10 L8,3 L9,11 Z" fill="#111"/></g>
<g transform="translate(265.0,196.0) scale(1.0)"><path d="M5,18 L2,10 Q2,8 4,9 L6,12 L6,3 Q7,1.5 8,3 L8.5,9 L9,1.5 Q10.5,0.5 11,2 L11.5,9 L12.5,2.5 Q14,1.5 14.5,3 L14.5,10 L15.5,5 Q17,4 17,6 L16,14 L14,18 Z" fill="#fff" stroke="#111" stroke-width="1.1"/></g>
<g transform="translate(294.0,196.0) scale(1.0)"><ellipse cx="10" cy="11" rx="9" ry="3.5" fill="none" stroke="#333" stroke-width="1"/><ellipse cx="10.5" cy="10.5" rx="3" ry="9" fill="none" stroke="#333" stroke-width="1"/><path d="M12,4 L14,9 L10,9 Z" fill="#111"/><path d="M8,12 L12,13 L9,16 Z" fill="#111"/></g>
<g transform="translate(322.0,196.0) scale(1.0)"><circle cx="12" cy="8" r="6.5" fill="#f8f8f8" stroke="#222" stroke-width="1.3"/><path d="M7,13 L1.5,18.5" stroke="#111" stroke-width="2.6"/><path d="M12,4.5 L12,9 M9.5,6.5 L14.5,6.5 M9.5,10.5 L14.5,10.5" stroke="#222" stroke-width="1.1"/></g>
<g transform="translate(350.5,196.0) scale(1.0)"><rect x="6" y="1" width="13" height="13" fill="none" stroke="#222" stroke-width="1" stroke-dasharray="1.5 1.5"/><circle cx="8" cy="11" r="5.5" fill="#f8f8f8" stroke="#222" stroke-width="1.3"/><path d="M4,15 L0.5,18.5" stroke="#111" stroke-width="2.6"/></g>
<g transform="translate(378.0,196.0) scale(1.0)"><path d="M0.5,5 L0.5,0.5 L5,0.5 M15,0.5 L19.5,0.5 L19.5,5 M19.5,15 L19.5,19.5 L15,19.5 M5,19.5 L0.5,19.5 L0.5,15" stroke="#111" stroke-width="2"/><circle cx="11" cy="8.5" r="6" fill="#f8f8f8" stroke="#222" stroke-width="1.3"/><path d="M6.5,13 L3,16.5" stroke="#111" stroke-width="2.4"/></g>
<g transform="translate(406.0,196.0) scale(1.0)"><circle cx="12" cy="8" r="7" fill="#f0f0f0" stroke="#222" stroke-width="1.3"/><circle cx="13.5" cy="6" r="2.6" fill="#e8d020" stroke="#8a7a00" stroke-width="0.6"/><circle cx="10.5" cy="9.5" r="2.4" fill="#e8d020" stroke="#8a7a00" stroke-width="0.6"/><path d="M6.5,14 L1.5,18.5" stroke="#111" stroke-width="2.6"/></g>
<g transform="translate(434.0,196.0) scale(1.0)"><path d="M19,6 Q13,0 5,4" fill="none" stroke="#333" stroke-width="2.6"/><path d="M1,7 L7,1 L8,8 Z" fill="#111"/><circle cx="11" cy="12" r="4.5" fill="#f8f8f8" stroke="#222" stroke-width="1.3"/><path d="M7.5,15.5 L4,19" stroke="#111" stroke-width="2.2"/></g>
<g transform="translate(461.4,196.0) scale(1.0)"><rect x="0.5" y="0.5" width="19" height="19" fill="#c8c8c8" stroke="#222" stroke-width="1.4"/><path d="M10,0.5 L10,19.5 M0.5,10 L19.5,10" stroke="#222" stroke-width="1.4"/><rect x="11" y="1" width="4" height="1" fill="#3050c0"/></g>
<g transform="translate(490.0,196.0) scale(1.0)"><path d="M1,12 L3,8 L8,8 L10,4 L16,4 L17,8 L20,9 L20,13 L1,13 Z" fill="#e02020" stroke="#700" stroke-width="0.6"/><rect x="10.5" y="5" width="4.5" height="3" fill="#fff"/><circle cx="5" cy="13.5" r="2.2" fill="#222"/><circle cx="16" cy="13.5" r="2.2" fill="#222"/><path d="M0,16.5 L21,16.5" stroke="#777" stroke-width="0.8"/></g>
<g transform="translate(518.0,196.0) scale(1.0)"><path d="M1,15 L7,4 L21,7 L16,19 Z" fill="#f0f0f0" stroke="#888" stroke-width="0.8"/><path d="M4,10 L18,13 M10,5 L8,17 M14,6 L12,18" stroke="#999" stroke-width="0.7"/><path d="M10,11 L12,6" stroke="#20a020" stroke-width="1.6"/><path d="M10,11 L18,14" stroke="#e02020" stroke-width="1.6"/><rect x="8.5" y="9.5" width="3" height="3" fill="#fff" stroke="#111133" stroke-width="1.1"/></g>
<g transform="translate(546.0,196.0) scale(1.0)"><circle cx="10" cy="10" r="9" fill="none" stroke="#555" stroke-width="1"/><path d="M10,10 L19,10" stroke="#1a1a60" stroke-width="1.3"/><rect x="7.8" y="8.3" width="3.4" height="3.4" fill="#fff" stroke="#111133" stroke-width="1.1"/></g>
<g transform="translate(574.0,196.0) scale(1.0)"><circle cx="6" cy="6" r="3.3" fill="#f2c010" stroke="#b07000" stroke-width="0.8"/><rect x="11" y="5" width="6" height="6" fill="#f2c010" stroke="#b07000" stroke-width="0.8"/><path d="M6,11 L9,17 L3,17 Z" fill="none" stroke="#c06010" stroke-width="1.1"/><path d="M17,0 L19,0 L19,2 M0,18 L0,20 L2,20" stroke="#222" stroke-width="0.8"/></g>
<g transform="translate(602.0,196.0) scale(1.0)"><path d="M10,1 Q17,1 17,8 Q17,11 13,14 L13,17 L7,17 L7,14 Q3,11 3,8 Q3,1 10,1 Z" fill="#a8a8a8" stroke="#555" stroke-width="0.8"/><path d="M7,4 Q9,3 10,5" stroke="#eee" stroke-width="1.5" fill="none"/><rect x="7.5" y="17" width="5" height="2.5" rx="1" fill="#777"/></g>
<g transform="translate(630.0,196.0) scale(1.0)"><path d="M6.5,9 L6.5,5.5 Q6.5,1.5 10,1.5 Q13.5,1.5 13.5,5.5 L13.5,9" fill="none" stroke="#111" stroke-width="1.6"/><rect x="4" y="9" width="12" height="10" rx="1.5" fill="#b8b8b8" stroke="#222" stroke-width="1.2"/><path d="M6,13 L14,13 M6,15.5 L14,15.5" stroke="#888" stroke-width="0.8"/></g>
<g transform="translate(658.0,196.0) scale(1.0)"><path d="M1,1.3 L18.8,5.3 L18.5,14.5 L8.5,19.3 L1.3,11.3 Z" fill="#1a2a90" stroke="#111" stroke-width="1.1"/><path d="M1,1.3 L18.8,5.3 L8.5,11 L1.3,7 Z" fill="#f59070"/><path d="M8.5,11 L18.8,5.3 L18.6,8.5 L8.5,14 Z" fill="#e01010"/><path d="M8.5,14 L18.6,8.5 L18.6,11 L8.5,16.5 Z" fill="#d4d4d4"/><path d="M1.3,7 L8.5,11 L8.5,15 L1.3,10 Z" fill="#ffffff"/></g>
<g transform="translate(686.0,196.0) scale(1.0)"><circle cx="10" cy="10" r="9.7" fill="#111"/><circle cx="10" cy="10" r="4.9" fill="#fff"/><path d="M9.86,2.80 A7.2,7.2 0 0 1 13.72,3.84" fill="none" stroke="#ff0000" stroke-width="4.6"/><path d="M13.47,3.69 A7.2,7.2 0 0 1 16.31,6.53" fill="none" stroke="#ff7f00" stroke-width="4.6"/><path d="M16.16,6.28 A7.2,7.2 0 0 1 17.20,10.14" fill="none" stroke="#ffd000" stroke-width="4.6"/><path d="M17.20,9.86 A7.2,7.2 0 0 1 16.16,13.72" fill="none" stroke="#c0e020" stroke-width="4.6"/><path d="M16.31,13.47 A7.2,7.2 0 0 1 13.47,16.31" fill="none" stroke="#60d040" stroke-width="4.6"/><path d="M13.72,16.16 A7.2,7.2 0 0 1 9.86,17.20" fill="none" stroke="#30d070" stroke-width="4.6"/><path d="M10.14,17.20 A7.2,7.2 0 0 1 6.28,16.16" fill="none" stroke="#00e0e0" stroke-width="4.6"/><path d="M6.53,16.31 A7.2,7.2 0 0 1 3.69,13.47" fill="none" stroke="#2090f0" stroke-width="4.6"/><path d="M3.84,13.72 A7.2,7.2 0 0 1 2.80,9.86" fill="none" stroke="#1030e0" stroke-width="4.6"/><path d="M2.80,10.14 A7.2,7.2 0 0 1 3.84,6.28" fill="none" stroke="#7020e0" stroke-width="4.6"/><path d="M3.69,6.53 A7.2,7.2 0 0 1 6.53,3.69" fill="none" stroke="#d010e0" stroke-width="4.6"/><path d="M6.28,3.84 A7.2,7.2 0 0 1 10.14,2.80" fill="none" stroke="#ff0080" stroke-width="4.6"/><circle cx="10" cy="10" r="4.9" fill="#fff" stroke="#222" stroke-width="0.6"/></g>
<g transform="translate(714.0,196.0) scale(1.0)"><circle cx="10" cy="10" r="9" fill="url(#gs)" stroke="#111" stroke-width="1.4"/><path d="M10,1 Q5,9 7,19" fill="none" stroke="#3a2a2a" stroke-width="1.1"/><path d="M1.5,12.5 Q10,11 18.5,13" fill="none" stroke="#3a2a2a" stroke-width="1.1"/></g>
<g transform="translate(742.0,196.0) scale(1.0)"><path d="M0.5,0 L0.5,21 M4.5,0 L4.5,21 M8.5,0 L8.5,21 M12.5,0 L12.5,21 M16.5,0 L16.5,21 M20.5,0 L20.5,21 M0,1 L21,1 M0,5 L21,5 M0,9 L21,9 M0,13 L21,13 M0,17 L21,17 M0,20.5 L21,20.5" stroke="#7a6a78" stroke-width="0.7"/><circle cx="10" cy="10" r="9" fill="url(#gs)" stroke="#111" stroke-width="1.4"/><path d="M10,1 Q5,9 7,19" fill="none" stroke="#3a2a2a" stroke-width="1.1"/><path d="M1.5,12.5 Q10,11 18.5,13" fill="none" stroke="#3a2a2a" stroke-width="1.1"/></g>
<g transform="translate(769.5,196.0) scale(1.0)"><ellipse cx="11" cy="17" rx="8" ry="2.5" fill="#bbb" opacity="0.6"/><circle cx="10" cy="9.5" r="8.5" fill="url(#bs)"/></g>
<g transform="translate(802.0,196.0) scale(1.0)"><path d="M2,5 L19,1 L15,13 Z" fill="#f59a20" stroke="#7a3a00" stroke-width="0.8"/><path d="M2,5 L15,13 L9,6 Z" fill="#ffe0b0"/></g>
<g transform="translate(826.0,196.0) scale(1.0)"><circle cx="10" cy="10" r="6.5" fill="#e8b838" stroke="#5a4000" stroke-width="3.5" stroke-dasharray="2.2 2"/><circle cx="10" cy="10" r="6" fill="#e8b838"/><rect x="8" y="5" width="4" height="7" rx="1.5" fill="#999" stroke="#333" stroke-width="0.8"/></g>
<g transform="translate(854.0,196.0) scale(1.0)"><path d="M0,2 L10,2 M0,12 L10,12 M3,3 L3,11 M10,12 L10,21 M18,12 L18,21 M11,18 L17,18" stroke="#111" stroke-width="1.2"/><path d="M1.5,5 L3,3 L4.5,5 M1.5,9 L3,11 L4.5,9" stroke="#111" stroke-width="0.9" fill="none"/><rect x="8.7" y="0.7" width="2.6" height="2.6" fill="#fff" stroke="#111133" stroke-width="1.1"/><rect x="8.7" y="10.7" width="2.6" height="2.6" fill="#fff" stroke="#111133" stroke-width="1.1"/><rect x="16.7" y="10.7" width="2.6" height="2.6" fill="#fff" stroke="#111133" stroke-width="1.1"/></g>
<g transform="translate(882.0,196.0) scale(1.0)"><circle cx="10" cy="10" r="9.5" fill="#111"/><circle cx="11" cy="9" r="8" fill="#6cc040"/><path d="M4,4 Q8,2 11,5 Q8,10 5,12 Z" fill="#d8e8d0" opacity="0.8"/><path d="M5,14 Q9,12 12,16 L8,18 Z" fill="#111"/></g>
<g transform="translate(909.6,196.0) scale(1.0)"><circle cx="10" cy="10" r="9.5" fill="#3050c8"/><circle cx="9" cy="7" r="6" fill="#5a78e0" opacity="0.6"/><text x="10" y="15.5" text-anchor="middle" font-family="Liberation Serif" font-weight="700" font-size="15" fill="#fff">?</text></g>
<g transform="translate(938.0,196.0) scale(1.0)"><circle cx="10" cy="10" r="10" fill="url(#rb)"/></g>
<g transform="translate(965.8,196.0) scale(1.0)"><circle cx="10" cy="10" r="10" fill="url(#pg)"/></g>
<path d="M92,219 L87,219 L92,214 Z" fill="#555a60"/>
<path d="M259.5,219 L254.5,219 L259.5,214 Z" fill="#555a60"/>
<path d="M456,219 L451,219 L456,214 Z" fill="#555a60"/>
<path d="M483.4,219 L478.4,219 L483.4,214 Z" fill="#555a60"/>
<path d="M512,219 L507,219 L512,214 Z" fill="#555a60"/>
<path d="M540,219 L535,219 L540,214 Z" fill="#555a60"/>
<path d="M568,219 L563,219 L568,214 Z" fill="#555a60"/>
<path d="M596,219 L591,219 L596,214 Z" fill="#555a60"/>
<path d="M624,219 L619,219 L624,214 Z" fill="#555a60"/>
<path d="M652,219 L647,219 L652,214 Z" fill="#555a60"/>
<path d="M680,219 L675,219 L680,214 Z" fill="#555a60"/>
<path d="M708,219 L703,219 L708,214 Z" fill="#555a60"/>
<path d="M764,219 L759,219 L764,214 Z" fill="#555a60"/>
<path d="M791.5,219 L786.5,219 L791.5,214 Z" fill="#555a60"/>
<path d="M824,219 L819,219 L824,214 Z" fill="#555a60"/>
<path d="M848,219 L843,219 L848,214 Z" fill="#555a60"/>
<path d="M876,219 L871,219 L876,214 Z" fill="#555a60"/>
<path d="M904,219 L899,219 L904,214 Z" fill="#555a60"/>
<path d="M931.6,219 L926.6,219 L931.6,214 Z" fill="#555a60"/>
<g transform="translate(4.0,237.5) scale(0.95)"><path d="M5,1 L15,11 L11,11 L14,17 L12,18 L9,12 L5,15 Z" fill="#fff" stroke="#111" stroke-width="1.1"/></g>
<g transform="translate(32.5,237.5) scale(0.95)"><circle cx="10" cy="10" r="2" fill="#fff" stroke="#1a1a50" stroke-width="1.1"/></g>
<path d="M56,260 L51,260 L56,255 Z" fill="#555a60"/>
<g transform="translate(4.0,265.5) scale(0.95)"><path d="M3,17 L8,5 L16,14" fill="none" stroke="#1a1a50" stroke-width="1"/><rect x="1.5" y="15.5" width="3" height="3" fill="#fff" stroke="#111133" stroke-width="1.1"/><rect x="6.5" y="3.5" width="3" height="3" fill="#fff" stroke="#111133" stroke-width="1.1"/><rect x="14.5" y="12.5" width="3" height="3" fill="#fff" stroke="#111133" stroke-width="1.1"/></g>
<g transform="translate(32.5,265.5) scale(0.95)"><path d="M4,6 Q12,3 13,10 Q13,16 4,16" fill="none" stroke="#1a1a50" stroke-width="1"/><rect x="2.5" y="4.5" width="3" height="3" fill="#fff" stroke="#111133" stroke-width="1.1"/><rect x="12.5" y="1.5" width="3" height="3" fill="#fff" stroke="#111133" stroke-width="1.1"/><rect x="2.5" y="14.5" width="3" height="3" fill="#fff" stroke="#111133" stroke-width="1.1"/><rect x="13.5" y="16.5" width="3" height="3" fill="#fff" stroke="#111133" stroke-width="1.1"/></g>
<path d="M28,288 L23,288 L28,283 Z" fill="#555a60"/>
<path d="M56,288 L51,288 L56,283 Z" fill="#555a60"/>
<g transform="translate(4.0,293.5) scale(0.95)"><circle cx="10" cy="10" r="9" fill="none" stroke="#1a1a50" stroke-width="1.1"/><path d="M10,11 L16,5" stroke="#1a1a50" stroke-width="0.8"/><rect x="8.5" y="9.5" width="3" height="3" fill="#fff" stroke="#111133" stroke-width="1.1"/><rect x="14.5" y="3.5" width="3" height="3" fill="#fff" stroke="#111133" stroke-width="1.1"/></g>
<g transform="translate(32.5,293.5) scale(0.95)"><ellipse cx="10" cy="11" rx="9.5" ry="6.5" fill="none" stroke="#1a1a50" stroke-width="1.1"/><path d="M10,5 L10,12 L19,12" stroke="#1a1a50" stroke-width="0.8" fill="none"/><rect x="8.5" y="3.5" width="3" height="3" fill="#fff" stroke="#111133" stroke-width="1.1"/><rect x="8.5" y="10.5" width="3" height="3" fill="#fff" stroke="#111133" stroke-width="1.1"/><rect x="17.5" y="10.5" width="3" height="3" fill="#fff" stroke="#111133" stroke-width="1.1"/></g>
<path d="M28,316 L23,316 L28,311 Z" fill="#555a60"/>
<path d="M56,316 L51,316 L56,311 Z" fill="#555a60"/>
<g transform="translate(4.0,321.5) scale(0.95)"><path d="M4,2 Q12,3 16,11 L4,18 Z" fill="none" stroke="#1a1a50" stroke-width="1"/><rect x="2.5" y="0.5" width="3" height="3" fill="#fff" stroke="#111133" stroke-width="1.1"/><rect x="14.5" y="9.5" width="3" height="3" fill="#fff" stroke="#111133" stroke-width="1.1"/><rect x="2.5" y="16.5" width="3" height="3" fill="#fff" stroke="#111133" stroke-width="1.1"/></g>
<g transform="translate(32.5,321.5) scale(0.95)"><rect x="3" y="5" width="14" height="10" fill="none" stroke="#1a1a50" stroke-width="1.3"/><rect x="15.5" y="3.5" width="3" height="3" fill="#fff" stroke="#111133" stroke-width="1.1"/><rect x="1.5" y="13.5" width="3" height="3" fill="#fff" stroke="#111133" stroke-width="1.1"/></g>
<path d="M28,344 L23,344 L28,339 Z" fill="#555a60"/>
<path d="M56,344 L51,344 L56,339 Z" fill="#555a60"/>
<g transform="translate(4.0,349.5) scale(0.95)"><path d="M5,2 L15,2 L19,10 L15,18 L5,18 L1,10 Z" transform="translate(10 10) scale(0.9 0.75) translate(-10 -10)" fill="none" stroke="#1a1a50" stroke-width="1.1"/><path d="M10,10 L17,10" stroke="#1a1a50" stroke-width="0.8"/><rect x="8.5" y="8.5" width="3" height="3" fill="#fff" stroke="#111133" stroke-width="1.1"/><rect x="15.5" y="8.5" width="3" height="3" fill="#fff" stroke="#111133" stroke-width="1.1"/></g>
<g transform="translate(32.5,349.5) scale(0.95)"><path d="M3,2 L9,2 Q16,3 16,10 L16,17" fill="none" stroke="#111" stroke-width="1.5"/><path d="M9,2 L16,2 L16,10" fill="none" stroke="#888" stroke-width="0.8"/><rect x="1.5" y="0.5" width="3" height="3" fill="#fff" stroke="#111133" stroke-width="1.1"/><rect x="14.5" y="15.5" width="3" height="3" fill="#fff" stroke="#111133" stroke-width="1.1"/></g>
<path d="M28,372 L23,372 L28,367 Z" fill="#555a60"/>
<path d="M56,372 L51,372 L56,367 Z" fill="#555a60"/>
<g transform="translate(4.0,377.5) scale(0.95)"><path d="M5,3 L17,3 L15,16 L10,18 L2,13 Z" fill="url(#bsph)" stroke="#1a1a50" stroke-width="0.8"/><path d="M4,8 L16,10 M10,3 L9,17" stroke="#c8d0f8" stroke-width="0.6"/><rect x="3.5" y="1.5" width="3" height="3" fill="#fff" stroke="#111133" stroke-width="1.1"/><rect x="15.5" y="1.5" width="3" height="3" fill="#fff" stroke="#111133" stroke-width="1.1"/><rect x="0.5" y="11.5" width="3" height="3" fill="#fff" stroke="#111133" stroke-width="1.1"/><rect x="8.5" y="16.5" width="3" height="3" fill="#fff" stroke="#111133" stroke-width="1.1"/></g>
<g transform="translate(32.5,377.5) scale(0.95)"><path d="M2,6 L8,1 Q17,3 17,10 L15,19 L11,14 Q11,8 2,6 Z" fill="url(#bsph)" stroke="#111" stroke-width="0.9"/><path d="M2,6 L8,1 L15,5 L11,9 Z" fill="#fff" opacity="0.9"/><path d="M11,14 L15,19 L16,12 Z" fill="#fff" opacity="0.9"/></g>
<path d="M28,400 L23,400 L28,395 Z" fill="#555a60"/>
<path d="M56,400 L51,400 L56,395 Z" fill="#555a60"/>
<g transform="translate(4.0,405.5) scale(0.95)"><path d="M2,5 L9,1 L18,4 L18,15 L10,19 L2,16 Z" fill="#6a84e8" stroke="#1a1a50" stroke-width="0.9"/><path d="M2,5 L10,8 L18,4 L9,1 Z" fill="#aab8f0"/><path d="M10,8 L10,19 L18,15 L18,4 Z" fill="#4a64c8"/></g>
<g transform="translate(32.5,405.5) scale(0.95)"><circle cx="13" cy="7" r="6.5" fill="url(#bsph)" stroke="#1a1a50" stroke-width="0.8"/><circle cx="7" cy="13" r="6.5" fill="url(#bsph)" stroke="#1a1a50" stroke-width="0.8"/><path d="M2,13 Q7,10 12,13 M7,7 Q5,13 7,19" stroke="#2a3a90" stroke-width="0.6" fill="none"/></g>
<path d="M28,428 L23,428 L28,423 Z" fill="#555a60"/>
<path d="M56,428 L51,428 L56,423 Z" fill="#555a60"/>
<g transform="translate(4.0,433.5) scale(0.95)"><ellipse cx="10" cy="2.5" rx="5" ry="2" fill="none" stroke="#222" stroke-width="0.9"/><path d="M1,8 Q10,12 19,8 L19,17 Q10,21 1,17 Z" fill="#6a84e8" stroke="#1a1a50" stroke-width="0.9"/><ellipse cx="10" cy="14" rx="5" ry="2.2" fill="#fff"/></g>
<g transform="translate(32.5,433.5) scale(0.95)"><path d="M4,6 L12,1 L19,5 L16,12 L12,19 L2,15 Z" fill="url(#bsph)" stroke="#1a1a50" stroke-width="0.9"/><path d="M3,10 L17,8 M8,4 L7,17 M14,3 L12,18 M4,6 L12,19" stroke="#c8d0f8" stroke-width="0.6"/></g>
<path d="M28,456 L23,456 L28,451 Z" fill="#555a60"/>
<path d="M56,456 L51,456 L56,451 Z" fill="#555a60"/>
<g transform="translate(4.0,461.5) scale(0.95)"><path d="M1,3 L5,3 Q6,0 8,2 L9,3 L12,3 L12,8 Q15,9 13,11 L12,12 L8,12 L8,8 Q5,9 4,7 L1,8 Z" fill="#f0a020" stroke="#6a3a00" stroke-width="0.8"/><path d="M8,10 L12,10 Q13,8 15,10 L18,10 L18,14 Q20,15 18,17 L18,19 L9,19 L9,16 Q7,15 9,13 Z" fill="#fff" stroke="#222" stroke-width="0.8"/></g>
<g transform="translate(32.5,461.5) scale(0.95)"><path d="M1,19 L3,5 L8,11 L17,1 L12,13 L20,12 L10,19 Z" fill="url(#ex)"/></g>
<path d="M28,484 L23,484 L28,479 Z" fill="#555a60"/>
<g transform="translate(4.0,489.5) scale(0.95)"><path d="M11,1 L18,1 L16,9 L11,9 Z" fill="#1a2a90"/><rect x="1" y="9" width="12" height="5" fill="#fff" stroke="#222" stroke-width="1"/><path d="M12,13 L17,17 L14,20 L9,16 Z" fill="#fff" stroke="#222" stroke-width="1"/></g>
<g transform="translate(32.5,489.5) scale(0.95)"><path d="M11,1 L18,1 L16,10 L11,10 Z" fill="#1a2a90"/><rect x="2" y="10" width="17" height="6" fill="#fff" stroke="#222" stroke-width="1"/><path d="M11,10 L11,16" stroke="#222" stroke-width="1"/></g>
<g transform="translate(4.0,517.5) scale(0.95)"><circle cx="10" cy="6" r="5.5" fill="#111"/><circle cx="6" cy="13" r="5.5" fill="#111"/><circle cx="14" cy="13" r="5.5" fill="#111"/><circle cx="6.5" cy="13" r="3.5" fill="#fff"/><circle cx="14" cy="13" r="3.5" fill="#1a2060"/><circle cx="10" cy="6.5" r="3.3" fill="#4050b0"/></g>
<g transform="translate(32.5,517.5) scale(0.95)"><circle cx="11" cy="5" r="4" fill="#5a6ae0" stroke="#222" stroke-width="0.8"/><circle cx="5" cy="14" r="4" fill="#fff" stroke="#222" stroke-width="0.8"/><circle cx="16" cy="14" r="4" fill="#101850"/></g>
<path d="M28,540 L23,540 L28,535 Z" fill="#555a60"/>
<g transform="translate(4.0,545.5) scale(0.95)"><path d="M2,4 Q10,3 14,14 L14,16" fill="none" stroke="#111" stroke-width="1.6"/><circle cx="4.5" cy="4" r="1.6" fill="#fff" stroke="#111"/><rect x="13.5" y="14.5" width="3" height="3" fill="#fff" stroke="#111133" stroke-width="1.1"/></g>
<g transform="translate(32.5,545.5) scale(0.95)"><path d="M4,3 Q14,3 17,15 L17,19" fill="none" stroke="#111" stroke-width="2"/><path d="M3,2 L12,2 M18,9 L18,17" stroke="#111" stroke-width="1" stroke-dasharray="1 1.5"/><rect x="9.5" y="-0.5" width="3" height="3" fill="#fff" stroke="#111133" stroke-width="1.1"/><rect x="16.5" y="10.5" width="3" height="3" fill="#fff" stroke="#111133" stroke-width="1.1"/></g>
<path d="M56,568 L51,568 L56,563 Z" fill="#555a60"/>
<g transform="translate(4.0,573.5) scale(0.95)"><path d="M2,2 L18,2 L18,7 L16,5 L12.5,5 L12.5,17 L15,19 L5,19 L7.5,17 L7.5,5 L4,5 L2,7 Z" fill="#6a84e8" stroke="#1a1a50" stroke-width="1"/></g>
<g transform="translate(32.5,573.5) scale(0.95)"><rect x="2" y="12" width="6" height="6" fill="#f8f8f8" stroke="#222" stroke-width="0.9"/><rect x="13" y="2" width="6" height="6" fill="#6a84e8" stroke="#1a1a50" stroke-width="0.9"/><path d="M6,14 L13,7" stroke="#222" stroke-width="1"/><path d="M10,7 L13,7 L13,10" stroke="#222" stroke-width="1" fill="none"/></g>
<path d="M56,596 L51,596 L56,591 Z" fill="#555a60"/>
<g transform="translate(4.0,601.5) scale(0.95)"><rect x="1" y="1" width="6" height="6" fill="#6a84e8" stroke="#1a1a50" stroke-width="0.8"/><rect x="1" y="12" width="6" height="6" fill="#f8f8f8" stroke="#222" stroke-width="0.8"/><rect x="11" y="6" width="6" height="6" fill="#6a84e8" stroke="#1a1a50" stroke-width="0.8"/><rect x="11" y="13" width="6" height="6" fill="#6a84e8" stroke="#1a1a50" stroke-width="0.8"/><path d="M8,4 L10,4" stroke="#222"/></g>
<g transform="translate(32.5,601.5) scale(0.95)"><rect x="2" y="2" width="5" height="14" fill="#e8e8e8" stroke="#333" stroke-width="0.9"/><path d="M10,12 L16,6 L19,9 L13,16 Z" fill="#6a84e8" stroke="#1a1a50" stroke-width="0.9"/><path d="M7,3 Q14,2 15,8" fill="none" stroke="#333" stroke-width="0.9"/></g>
<g transform="translate(4.0,629.5) scale(0.95)"><path d="M1,5 L9,1 L19,4 L19,14 L10,19 L1,15 Z" fill="#6a84e8" stroke="#1a1a50" stroke-width="0.9"/><path d="M1,5 L10,8 L19,4 L9,1 Z" fill="#aab8f0"/><path d="M5,11 L11,13 L11,19 L5,17 Z" fill="#fff" stroke="#222" stroke-width="0.7"/></g>
<g transform="translate(32.5,629.5) scale(0.95)"><path d="M1,16 L5,12 L19,12 L15,16 Z" fill="#6a84e8" stroke="#1a1a50" stroke-width="0.8"/><path d="M6,13 L6,3 M11,13 L11,3 M16,13 L16,3" stroke="#888" stroke-width="1.6"/><path d="M4,5 L6,1 L8,5 M9,5 L11,1 L13,5 M14,5 L16,1 L18,5" fill="#888"/></g>
<path d="M28,652 L23,652 L28,647 Z" fill="#555a60"/>
<path d="M56,652 L51,652 L56,647 Z" fill="#555a60"/>
<g transform="translate(4.0,657.5) scale(0.95)"><rect x="1.0" y="1.0" width="4.5" height="4.5" fill="#fff" stroke="#1a2a90" stroke-width="1"/><rect x="7.5" y="1.0" width="4.5" height="4.5" fill="#fff" stroke="#1a2a90" stroke-width="1"/><rect x="14.0" y="1.0" width="4.5" height="4.5" fill="#fff" stroke="#1a2a90" stroke-width="1"/><rect x="1.0" y="7.5" width="4.5" height="4.5" fill="#fff" stroke="#1a2a90" stroke-width="1"/><rect x="7.5" y="7.5" width="4.5" height="4.5" fill="#fff" stroke="#1a2a90" stroke-width="1"/><rect x="14.0" y="7.5" width="4.5" height="4.5" fill="#fff" stroke="#1a2a90" stroke-width="1"/><rect x="1.0" y="14.0" width="4.5" height="4.5" fill="#fff" stroke="#1a2a90" stroke-width="1"/><rect x="7.5" y="14.0" width="4.5" height="4.5" fill="#fff" stroke="#1a2a90" stroke-width="1"/><rect x="14.0" y="14.0" width="4.5" height="4.5" fill="#fff" stroke="#1a2a90" stroke-width="1"/></g>
<g transform="translate(32.5,657.5) scale(0.95)"><rect x="6" y="2" width="8" height="5" fill="#fff" stroke="#222" stroke-width="0.9"/><rect x="7" y="8" width="6" height="4" fill="#fff" stroke="#222" stroke-width="0.9"/><rect x="6" y="13" width="8" height="5" fill="#fff" stroke="#222" stroke-width="0.9"/><path d="M10,0 L10,20" stroke="#e02020" stroke-width="1.3"/></g>
<path d="M28,680 L23,680 L28,675 Z" fill="#555a60"/>
<path d="M56,680 L51,680 L56,675 Z" fill="#555a60"/>
<g transform="translate(4.0,685.5) scale(0.95)"><path d="M2,5 L9,2 L9,16 L4,18 Z" fill="#f0f0f0" stroke="#333" stroke-width="0.9"/><path d="M8,4 L16,1 L17,14 L10,18 Z" fill="#6a84e8" stroke="#1a1a50" stroke-width="0.9"/></g>
<g transform="translate(32.5,685.5) scale(0.95)"><path d="M9,0 L9,20" stroke="#2a3ab0" stroke-width="2.5"/><path d="M3,6 L5,3 M2,10 L7,8 L10,11 L13,8 L17,9 M4,12 L3,17 L6,16 M14,12 L15,16 L18,19" stroke="#111" stroke-width="1.6" fill="none"/></g>
<path d="M28,708 L23,708 L28,703 Z" fill="#555a60"/>
<path d="M56,708 L51,708 L56,703 Z" fill="#555a60"/>
<g transform="translate(4.0,713.5) scale(0.95)"><path d="M1,10 L6,16 L18,2" fill="none" stroke="#111" stroke-width="2.6"/></g>
<g transform="translate(32.5,713.5) scale(0.95)"><path d="M1,6 L7,3 L13,5 L13,14 L7,17 L1,14 Z" fill="#ddd" stroke="#333" stroke-width="0.8"/><path d="M13,4 L20,16 Q16,19 9,16 Z" fill="#999" stroke="#333" stroke-width="0.8"/></g>
<path d="M28,736 L23,736 L28,731 Z" fill="#555a60"/>
<path d="M56,736 L51,736 L56,731 Z" fill="#555a60"/>
<g transform="translate(4.0,741.5) scale(0.95)"><path d="M2,14 L11,6 L19,14 L10,19 Z" fill="#e8c040" stroke="#222" stroke-width="0.9"/><path d="M11,6 L10,19 L19,14 Z" fill="#c89820"/><path d="M9,4 L15,0 L19,1 L19,4 L14,4 Z" fill="#888" stroke="#222" stroke-width="0.8"/></g>
<path d="M28,764 L23,764 L28,759 Z" fill="#555a60"/>
<g transform="translate(74.0,326.0) scale(0.9)"><path d="M4,8 L16,8 L15,19 L5,19 Z" fill="#c8c8c8" stroke="#666" stroke-width="0.9"/><path d="M7,10 L7,17 M10,10 L10,17 M13,10 L13,17" stroke="#888" stroke-width="1"/><path d="M3,8 L13,1 L15,3 L6,9" fill="#999" stroke="#555" stroke-width="0.8"/><circle cx="16" cy="3" r="2.5" fill="none" stroke="#3050f0" stroke-width="1"/></g>
<g transform="translate(74.0,354.0) scale(0.9)"><circle cx="10" cy="10" r="9.5" fill="#3050c8"/><circle cx="9" cy="7" r="6" fill="#5a78e0" opacity="0.6"/><text x="10" y="15.5" text-anchor="middle" font-family="Liberation Serif" font-weight="700" font-size="15" fill="#fff">?</text></g>
<rect x="74.5" y="247.5" width="17" height="13" rx="1" fill="#f6f6f6" stroke="#8a8a8a" stroke-width="1"/>
<rect x="75" y="251" width="16" height="1" fill="#e0c8c8"/>
<path d="M80,252 L80,247 L77,247 L83,241 L89,247 L86,247 L86,252 Z" fill="#fff" stroke="#111" stroke-width="1"/>
<circle cx="87.5" cy="256.5" r="4" fill="#c02070"/><circle cx="88.3" cy="255.6" r="2.6" fill="#2a8ad0"/><circle cx="86.6" cy="257.6" r="1.8" fill="#e03040"/>
<path d="M88.5,273 A7,7 0 1 0 81,286.5" fill="none" stroke="#9a9a9a" stroke-width="4"/>
<path d="M88.5,273 A7,7 0 1 0 81,286.5" fill="none" stroke="#ececec" stroke-width="2.2"/>
<path d="M85,268.5 L92.5,268.5 L92.5,276 Z" fill="#f4f4f4" stroke="#8a8a8a" stroke-width="1"/>
<path d="M77,282 L83,277 L88.5,282.5 L88.5,289 L77,289 Z" fill="#3a6ff0"/><path d="M77,286 L88.5,286 L88.5,289 L77,289 Z" fill="#5a88f0"/>
<path d="M73.5,297 L77.5,301 L77.5,319 M77.5,301 L81,305 L81.6,309 L85.5,313 L85.5,319 M85.5,313 L89.5,317" fill="none" stroke="#0000e8" stroke-width="1.3"/>
<rect x="71.4" y="294.59999999999997" width="3.6" height="3.6" fill="#0000e8"/>
<rect x="75.60000000000001" y="298.5" width="3.6" height="3.6" fill="#0000e8"/>
<rect x="79.2" y="303.09999999999997" width="3.6" height="3.6" fill="#0000e8"/>
<rect x="79.8" y="307.0" width="3.6" height="3.6" fill="#0000e8"/>
<rect x="83.7" y="310.9" width="3.6" height="3.6" fill="#0000e8"/>
<rect x="87.60000000000001" y="314.8" width="3.6" height="3.6" fill="#0000e8"/>
<g transform="translate(977.5,237.5) scale(0.85)"><path d="M1,1.3 L18.8,5.3 L18.5,14.5 L8.5,19.3 L1.3,11.3 Z" fill="#1a2a90" stroke="#111" stroke-width="1.1"/><path d="M1,1.3 L18.8,5.3 L8.5,11 L1.3,7 Z" fill="#f59070"/><path d="M8.5,11 L18.8,5.3 L18.6,8.5 L8.5,14 Z" fill="#e01010"/><path d="M8.5,14 L18.6,8.5 L18.6,11 L8.5,16.5 Z" fill="#d4d4d4"/><path d="M1.3,7 L8.5,11 L8.5,15 L1.3,10 Z" fill="#ffffff"/></g>
<g transform="translate(977.5,261.5) scale(0.85)"><path d="M3,17 L7,13 L16,3 L19,6 L9,16 L5,19 Z" fill="#f4f4f4" stroke="#555" stroke-width="0.9"/><path d="M12,6 L16,3 L19,6 L15,10 Z" fill="#e02828"/></g>
<g transform="translate(977.5,285.5) scale(0.85)"><circle cx="10" cy="10" r="9.7" fill="#111"/><circle cx="10" cy="10" r="4.9" fill="#fff"/><path d="M9.86,2.80 A7.2,7.2 0 0 1 13.72,3.84" fill="none" stroke="#ff0000" stroke-width="4.6"/><path d="M13.47,3.69 A7.2,7.2 0 0 1 16.31,6.53" fill="none" stroke="#ff7f00" stroke-width="4.6"/><path d="M16.16,6.28 A7.2,7.2 0 0 1 17.20,10.14" fill="none" stroke="#ffd000" stroke-width="4.6"/><path d="M17.20,9.86 A7.2,7.2 0 0 1 16.16,13.72" fill="none" stroke="#c0e020" stroke-width="4.6"/><path d="M16.31,13.47 A7.2,7.2 0 0 1 13.47,16.31" fill="none" stroke="#60d040" stroke-width="4.6"/><path d="M13.72,16.16 A7.2,7.2 0 0 1 9.86,17.20" fill="none" stroke="#30d070" stroke-width="4.6"/><path d="M10.14,17.20 A7.2,7.2 0 0 1 6.28,16.16" fill="none" stroke="#00e0e0" stroke-width="4.6"/><path d="M6.53,16.31 A7.2,7.2 0 0 1 3.69,13.47" fill="none" stroke="#2090f0" stroke-width="4.6"/><path d="M3.84,13.72 A7.2,7.2 0 0 1 2.80,9.86" fill="none" stroke="#1030e0" stroke-width="4.6"/><path d="M2.80,10.14 A7.2,7.2 0 0 1 3.84,6.28" fill="none" stroke="#7020e0" stroke-width="4.6"/><path d="M3.69,6.53 A7.2,7.2 0 0 1 6.53,3.69" fill="none" stroke="#d010e0" stroke-width="4.6"/><path d="M6.28,3.84 A7.2,7.2 0 0 1 10.14,2.80" fill="none" stroke="#ff0080" stroke-width="4.6"/><circle cx="10" cy="10" r="4.9" fill="#fff" stroke="#222" stroke-width="0.6"/></g>
<g transform="translate(977.5,308.5) scale(0.85)"><rect x="1" y="2" width="18" height="13" fill="#c8c8c8" stroke="#111" stroke-width="1.6"/><rect x="3" y="4" width="14" height="4" fill="#e8e8e8"/><path d="M7,18 L13,18 M10,15 L10,18" stroke="#111" stroke-width="2"/></g>
<g transform="translate(977.5,333.5) scale(0.85)"><rect x="1" y="2" width="18" height="16" fill="#3050c8" stroke="#555" stroke-width="1"/><rect x="1" y="2" width="18" height="3" fill="#aaa"/><text x="10" y="16" text-anchor="middle" font-family="Liberation Serif" font-weight="700" font-size="12" fill="#fff">?</text></g>
<g transform="translate(977.5,357.5) scale(0.85)"><circle cx="9" cy="12" r="7" fill="url(#bs)"/><path d="M12,6 L18,1 L19,4 L14,7" fill="#f4f4f4" stroke="#555" stroke-width="0.8"/><path d="M15,2 L19,1" stroke="#e02020" stroke-width="1.2"/></g>
<g transform="translate(977.5,380.5) scale(0.85)"><rect x="1" y="2" width="18" height="16" fill="#ccc" stroke="#555" stroke-width="1"/><path d="M1,7 L19,7 M1,11 L19,11 M1,15 L19,15" stroke="#888" stroke-width="0.8"/><path d="M9,5 L9,8 L17,8" stroke="#e02020" stroke-width="1"/><path d="M9,3 L9,6" stroke="#20a020" stroke-width="1"/></g>
<g transform="translate(977.5,404.5) scale(0.85)"><rect x="1" y="6" width="18" height="12" rx="2" fill="#333"/><rect x="6" y="3" width="7" height="4" fill="#333"/><circle cx="10" cy="12" r="4" fill="#888" stroke="#111"/><circle cx="10" cy="12" r="2" fill="#ccc"/></g>
<g transform="translate(977.5,429.5) scale(0.85)"><path d="M10,1 Q16,2 16,9 L16,14 L19,17 L1,17 L4,14 L4,9 Q4,2 10,1 Z" fill="#1870f0" stroke="#1040a0" stroke-width="0.8"/><path d="M8,17 Q10,20 12,17" fill="#1040a0"/></g>
<rect x="999" y="0" width="4" height="142" fill="#8d8d8d" />
<rect x="999" y="142" width="4" height="843" fill="#202020" />
<rect x="1002" y="142" width="1" height="843" fill="#2a2a2a" />
<rect x="999" y="985" width="4" height="95" fill="#8d8d8d" />
<rect x="1003" y="0" width="917" height="35" fill="#ffffff" />
<rect x="1003" y="34" width="917" height="1" fill="#e3e3e3" />
<path d="M1031,11 L1019,11 M1024.5,5.5 L1019,11 L1024.5,16.5" fill="none" stroke="#a9a9a9" stroke-width="1.6" />
<path d="M1055,11 L1067,11 M1061.5,5.5 L1067,11 L1061.5,16.5" fill="none" stroke="#a9a9a9" stroke-width="1.6" />
<path d="M1102.5,8 A6,6 0 1 0 1103,12" fill="none" stroke="#333" stroke-width="1.7" />
<polygon points="1098.5,4.5 1104,3.5 1103.5,9" fill="#333" />
<path d="M1137,-10 L1718,-10 Q1732,-10 1732,9 Q1732,28 1718,28 L1137,28 Q1123,28 1123,9 Q1123,-10 1137,-10 Z" fill="#eef2f9" />
<path d="M1140,-10 L1190,-10 Q1201.5,-10 1201.5,6 Q1201.5,22.3 1190,22.3 L1140,22.3 Q1128,22.3 1128,6 Q1128,-10 1140,-10 Z" fill="#ffffff" />
<circle cx="1140" cy="11" r="5.8" fill="none" stroke="#1f1f1f" stroke-width="1.4"/>
<rect x="1139.3" y="10" width="1.5" height="4.5" fill="#1f1f1f" />
<rect x="1139.3" y="7" width="1.5" height="1.5" fill="#1f1f1f" />
<text x="1152" y="15" font-family="Liberation Sans" font-size="12.5" fill="#1f1f1f" textLength="41" lengthAdjust="spacingAndGlyphs" stroke="#1f1f1f" stroke-width="0.45">Archivo</text>
<text x="1210" y="16" font-family="Liberation Sans" font-size="14" fill="#1f1f1f" textLength="439" lengthAdjust="spacingAndGlyphs" >C:/Users/CDH/Documents/GitHub/MaCAD25_Thesis/ui/index_new.html</text>
<polygon points="1708.0,4.0 1709.98,8.77 1715.13,9.18 1711.21,12.54 1712.41,17.57 1708.0,14.88 1703.59,17.57 1704.79,12.54 1700.87,9.18 1706.02,8.77" fill="none" stroke="#333" stroke-width="1.5" stroke-linejoin="round"/>
<path d="M1752,7 L1756,7 Q1756,4 1758.5,4 Q1761,4 1761,7 L1764,7 L1764,11 Q1767,11 1767,13.5 Q1767,16 1764,16 L1764,19 L1752,19 Z" fill="none" stroke="#333" stroke-width="1.6" />
<rect x="1784.5" y="4" width="1.2" height="14" fill="#a8c7fa" />
<path d="M1812,3.5 L1812,14 M1807.5,9.5 L1812,14 L1816.5,9.5 M1804.5,14 L1804.5,18 L1819.5,18 L1819.5,14" fill="none" stroke="#333" stroke-width="1.7" />
<path d="M1840,7.5 L1852,7.5 M1840,11 L1850,11 M1840,14.5 L1846,14.5" fill="none" stroke="#333" stroke-width="1.5" />
<circle cx="1850.5" cy="16" r="2.2" fill="#333"/>
<path d="M1852.5,16 L1852.5,6 L1856,6" fill="none" stroke="#333" stroke-width="1.4" />
<circle cx="1884" cy="11" r="10" fill="#c0391b"/>
<text x="1884" y="15" font-family="Liberation Sans" font-size="11" fill="#ffffff" text-anchor="middle" >c</text>
<circle cx="1919" cy="5.5" r="1.4" fill="#333"/><circle cx="1919" cy="11" r="1.4" fill="#333"/><circle cx="1919" cy="16.5" r="1.4" fill="#333"/>
<rect x="1003" y="35" width="917" height="1045" fill="#1b1b1b" />
<use href="#mass"/></svg>
<div style="position:absolute;left:1011px;top:557px;width:270px;height:40px;box-sizing:border-box;border-radius:6px;border:1px solid rgba(255,255,255,0.16);background:rgba(112,112,112,0.094);backdrop-filter:blur(8px);-webkit-backdrop-filter:blur(8px);"></div>
<div style="position:absolute;left:1011px;top:605px;width:270px;height:91px;box-sizing:border-box;border-radius:6px;border:1px solid rgba(255,255,255,0.16);background:rgba(112,112,112,0.094);backdrop-filter:blur(8px);-webkit-backdrop-filter:blur(8px);"></div>
<div style="position:absolute;left:1011px;top:704px;width:270px;height:213px;box-sizing:border-box;border-radius:6px;border:1px solid rgba(255,255,255,0.16);background:rgba(112,112,112,0.094);backdrop-filter:blur(8px);-webkit-backdrop-filter:blur(8px);"></div>
<div style="position:absolute;left:1011px;top:925px;width:270px;height:65px;box-sizing:border-box;border-radius:6px;border:1px solid rgba(255,255,255,0.16);background:rgba(112,112,112,0.094);backdrop-filter:blur(8px);-webkit-backdrop-filter:blur(8px);"></div>
<div style="position:absolute;left:1011px;top:998px;width:270px;height:38px;box-sizing:border-box;border-radius:6px;border:1px solid rgba(255,255,255,0.16);background:rgba(112,112,112,0.094);backdrop-filter:blur(8px);-webkit-backdrop-filter:blur(8px);"></div>
<svg width="1920" height="1080" viewBox="0 0 1920 1080" style="position:absolute;left:0;top:0;display:block"><text x="1022" y="582.5" font-family="Liberation Sans" font-size="14" fill="#f2f2f2" font-weight="700" textLength="92" lengthAdjust="spacingAndGlyphs" >Send to Rhino</text>
<rect x="1150.5" y="566.5" width="119" height="21" rx="5" fill="rgba(0,0,0,0.06)" stroke="rgba(255,255,255,0.2)" stroke-width="1"/>
<path d="M1186,575 L1189,571.5 M1187.5,577 L1191,573 M1190,575.5 L1196,580.5 M1193,580 L1197.5,576.5" fill="none" stroke="#f4f4f4" stroke-width="1.6" />
<text x="1205.5" y="582.5" font-family="Liberation Sans" font-size="13" fill="#eeeeee" textLength="30" lengthAdjust="spacingAndGlyphs" >Bake</text>
<text x="1022" y="629" font-family="Liberation Sans" font-size="14" fill="#f2f2f2" font-weight="700" textLength="36" lengthAdjust="spacingAndGlyphs" >Score</text>
<text x="1022" y="655.5" font-family="Liberation Sans" font-size="13" fill="#e6e6e6" textLength="142" lengthAdjust="spacingAndGlyphs" >unavailable masterplan</text>
<text x="1022" y="682.5" font-family="Liberation Sans" font-size="13" fill="#e6e6e6" textLength="119" lengthAdjust="spacingAndGlyphs" >unavailable context</text>
<text x="1022" y="728" font-family="Liberation Sans" font-size="14" fill="#f2f2f2" font-weight="700" textLength="154" lengthAdjust="spacingAndGlyphs" >Brief capacity &amp; Legend</text>
<text x="1022" y="757" font-family="Liberation Sans" font-size="13" fill="#ececec" textLength="37" lengthAdjust="spacingAndGlyphs" >office</text>
<rect x="1123.5" y="747.5" width="134" height="9" rx="4.5" fill="#444444" stroke="#5c5c5c" stroke-width="1"/>
<circle cx="1267.5" cy="752" r="3.8" fill="#2f74d0"/>
<text x="1123" y="770" font-family="Liberation Sans" font-size="9.5" fill="#d8d8d8" font-weight="700" textLength="65" lengthAdjust="spacingAndGlyphs" >-- / -- m² (--%)</text>
<text x="1022" y="791" font-family="Liberation Sans" font-size="13" fill="#ececec" textLength="40" lengthAdjust="spacingAndGlyphs" >leisure</text>
<rect x="1123.5" y="781.5" width="134" height="9" rx="4.5" fill="#444444" stroke="#5c5c5c" stroke-width="1"/>
<circle cx="1267.5" cy="786" r="3.8" fill="#17a745"/>
<text x="1123" y="804" font-family="Liberation Sans" font-size="9.5" fill="#d8d8d8" font-weight="700" textLength="65" lengthAdjust="spacingAndGlyphs" >-- / -- m² (--%)</text>
<text x="1022" y="826" font-family="Liberation Sans" font-size="13" fill="#ececec" textLength="42" lengthAdjust="spacingAndGlyphs" >culture</text>
<rect x="1123.5" y="816.5" width="134" height="9" rx="4.5" fill="#444444" stroke="#5c5c5c" stroke-width="1"/>
<circle cx="1267.5" cy="821" r="3.8" fill="#f5a42a"/>
<text x="1123" y="839" font-family="Liberation Sans" font-size="9.5" fill="#d8d8d8" font-weight="700" textLength="65" lengthAdjust="spacingAndGlyphs" >-- / -- m² (--%)</text>
<text x="1022" y="860" font-family="Liberation Sans" font-size="13" fill="#ececec" textLength="63" lengthAdjust="spacingAndGlyphs" >residential</text>
<rect x="1123.5" y="850.5" width="134" height="9" rx="4.5" fill="#444444" stroke="#5c5c5c" stroke-width="1"/>
<circle cx="1267.5" cy="855" r="3.8" fill="#e0303a"/>
<text x="1123" y="873" font-family="Liberation Sans" font-size="9.5" fill="#d8d8d8" font-weight="700" textLength="65" lengthAdjust="spacingAndGlyphs" >-- / -- m² (--%)</text>
<text x="1022" y="894.5" font-family="Liberation Sans" font-size="13" fill="#ececec" textLength="39" lengthAdjust="spacingAndGlyphs" >empty</text>
<rect x="1123.5" y="885.0" width="134" height="9" rx="4.5" fill="#444444" stroke="#5c5c5c" stroke-width="1"/>
<circle cx="1267.5" cy="889.5" r="3.8" fill="#d0d0d0"/>
<text x="1123" y="907.5" font-family="Liberation Sans" font-size="9.5" fill="#d8d8d8" font-weight="700" textLength="23" lengthAdjust="spacingAndGlyphs" >-- m²</text>
<text x="1022" y="949" font-family="Liberation Sans" font-size="13.5" fill="#f2f2f2" font-weight="700" textLength="179" lengthAdjust="spacingAndGlyphs" >Graph viewport parameters</text>
<text x="1022" y="977" font-family="Liberation Sans" font-size="13" fill="#dddddd" textLength="180" lengthAdjust="spacingAndGlyphs" >Display full masterplan graph</text>
<rect x="1234.5" y="961.5" width="35" height="19" rx="9.5" fill="#474747" stroke="#5f5f5f" stroke-width="1"/>
<circle cx="1243.8" cy="971.1" r="8" fill="#ffffff"/>
<path d="M1026,1012 L1028,1014.5 L1031.5,1010 M1026,1019 L1028,1021.5 L1031.5,1017 M1034,1012.5 L1039,1012.5 M1034,1020 L1039,1020" fill="none" stroke="#e0e0e0" stroke-width="1.4" />
<text x="1050.5" y="1022" font-family="Liberation Sans" font-size="13" fill="#e8e8e8" textLength="85" lengthAdjust="spacingAndGlyphs" >Requirements</text>
<rect x="1151.5" y="1003.5" width="124" height="27" rx="5" fill="#555555" stroke="#6e6e6e" stroke-width="1"/>
<path d="M1190,1012 L1183,1019" fill="none" stroke="#f0f0f0" stroke-width="2.2" />
<path d="M1180.5,1020 L1182.5,1022 L1180,1024 L1178.5,1022.5 Z" fill="none" stroke="#f0f0f0" stroke-width="1.1" />
<text x="1203.5" y="1022" font-family="Liberation Sans" font-size="13" fill="#f0f0f0" textLength="42" lengthAdjust="spacingAndGlyphs" >Design</text>
<path d="M1011,1052 Q1011,1044 1019,1044 L1273,1044 Q1281,1044 1281,1052 L1281,1080 L1011,1080 Z" fill="#000000"/>
<text x="1021.5" y="1068.5" font-family="Liberation Sans" font-size="14" fill="#ffffff" font-weight="700" textLength="84" lengthAdjust="spacingAndGlyphs" stroke="#ffffff" stroke-width="0.5">Andromeda</text>
<circle cx="1263" cy="1063" r="8" fill="#ffffff"/>
<rect x="1593.5" y="801.5" width="325" height="234" rx="6" fill="#232323" stroke="#4b4b4b" stroke-width="1"/>
<rect x="1747" y="806" width="18" height="3" fill="#bdbdbd" rx="1.5" />
<text x="1603" y="843" font-family="Liberation Sans" font-size="13" fill="#d6d6d6" textLength="222" lengthAdjust="spacingAndGlyphs" >Let’s dive into your masterplan—I’m</text>
<text x="1603" y="862" font-family="Liberation Sans" font-size="13" fill="#d6d6d6" textLength="165" lengthAdjust="spacingAndGlyphs" >Andromeda, ready to help.</text>
<path d="M1594,1052 Q1594,1044 1602,1044 L1910,1044 Q1918.5,1044 1918.5,1052 L1918.5,1080 L1594,1080 Z" fill="#000000"/>
<text x="1604" y="1068" font-family="Liberation Sans" font-size="14" fill="#8c8c8c" textLength="212" lengthAdjust="spacingAndGlyphs" >Ask anything about your project ...</text>
<circle cx="1901" cy="1063" r="8" fill="#ffffff"/></svg></body></html>
